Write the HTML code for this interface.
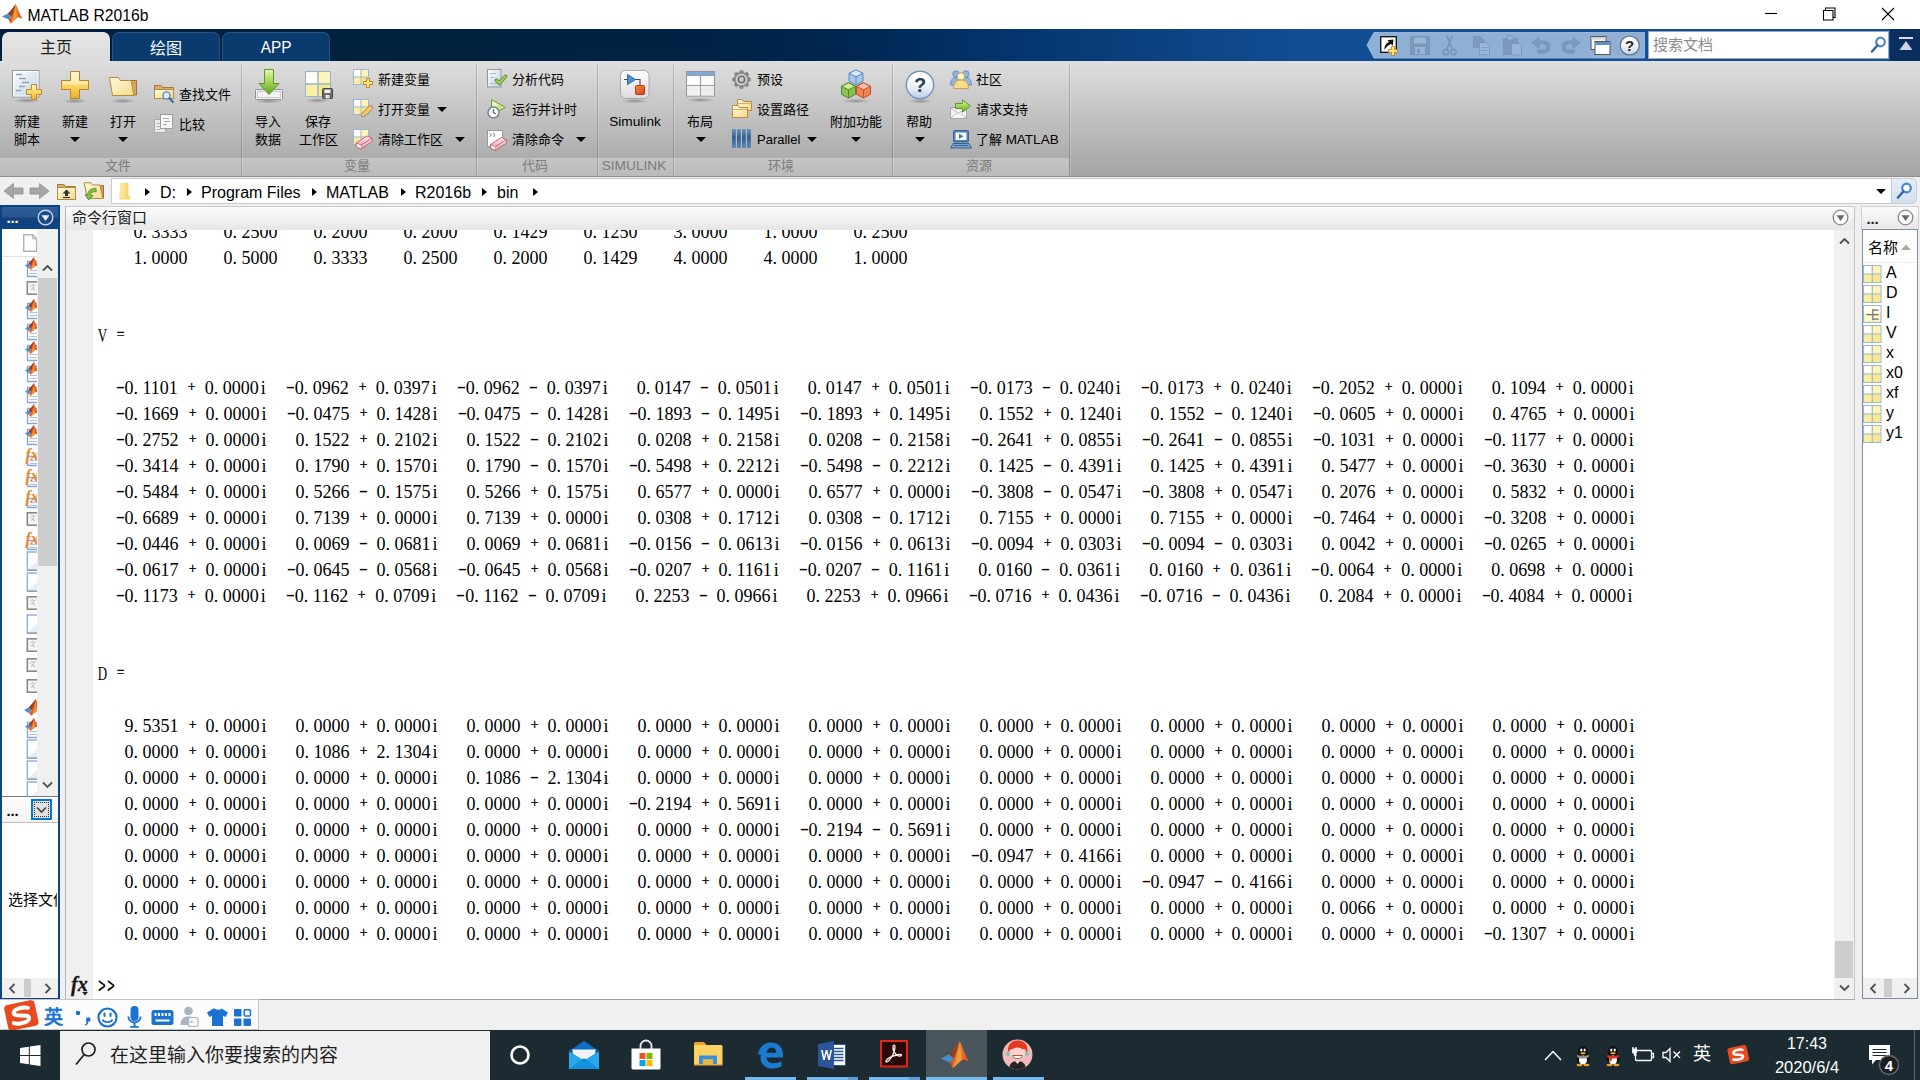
<!DOCTYPE html>
<html lang="zh-CN">
<head>
<meta charset="utf-8">
<title>MATLAB R2016b</title>
<style>
*{box-sizing:border-box;margin:0;padding:0}
html,body{width:1920px;height:1080px;overflow:hidden;background:#fff}
body{position:relative;font-family:"Liberation Sans",sans-serif;font-size:13px;color:#000;line-height:1}
.a{position:absolute}
.t{position:absolute;white-space:nowrap;line-height:1}
.c{text-align:center}
svg{position:absolute;overflow:visible}
/* title bar */
#titlebar{left:0;top:0;width:1920px;height:29px;background:#fff}
/* tab strip */
#tabstrip{left:0;top:29px;width:1920px;height:32px;background:linear-gradient(90deg,#02203d 0%,#01213f 25%,#002345 37%,#002853 45%,#03346c 52%,#0c4180 60%,#114e94 68%,#114f97 100%)}
.tab{position:absolute;top:3px;height:29px;width:108px;border-radius:7px 7px 0 0;font-size:16px;text-align:center;line-height:31px;color:#fff}
.tab.on{background:linear-gradient(#e6e6e6,#dcdcdc);color:#222}
.tab.off{background:#0a3b6e;border:1px solid #2a527f;border-bottom:none}
/* toolstrip */
#strip{left:0;top:61px;width:1920px;height:116px;background:linear-gradient(#dedede 0%,#dcdcdc 4%,#c0c0c0 50%,#a4a4a4 100%);border-bottom:1px solid #8e8e8e}
#band{left:0;top:97px;width:1069px;height:18px;background:linear-gradient(#c5c5c5,#bababa)}
.sep{position:absolute;top:3px;width:1px;height:111px;background:rgba(0,0,0,.17);box-shadow:1px 0 0 rgba(255,255,255,.22)}
.sl{position:absolute;top:96px;height:17px;line-height:17px;font-size:13px;color:#7b7b7b;text-align:center;white-space:nowrap}
.lb{position:absolute;font-size:13px;line-height:16px;white-space:nowrap;color:#000}
.lbc{position:absolute;font-size:13px;line-height:18px;white-space:nowrap;color:#000;text-align:center;width:80px}
.dd{position:absolute;width:0;height:0;border-left:5.5px solid transparent;border-right:5.5px solid transparent;border-top:5.5px solid #000}
#strip .lb,#strip .lbc{margin-top:.8px}
#strip .dd{margin-top:.8px}
/* address bar */
#addr{left:0;top:177px;width:1920px;height:28px;background:#f0f0f0}
#addrfield{left:111px;top:1px;width:1781px;height:26px;background:#fff;border:1px solid #c9c9c9}
.crumb{position:absolute;top:4.500px;font-size:16px;line-height:18px;white-space:nowrap}
.tri{position:absolute;top:8.500px;margin-left:1.500px;width:0;height:0;border-top:4.700px solid transparent;border-bottom:4.700px solid transparent;border-left:5.500px solid #000}
/* desktop */
#desk{left:0;top:205px;width:1920px;height:825px;background:#f0f0f0}
/* command window */
#cw{left:65px;top:1px;width:1790px;height:794px;border:1px solid #b2b2b2;border-top-color:#c9c9c9;border-right-color:#c4c4c4;border-bottom-color:#a2a2a2;background:#fff}
#cwhead{left:0;top:0;width:1788px;height:23px;background:linear-gradient(#fbfbfb,#f2f2f2 45%,#e6e6e6 100%)}
#gutter{left:0;top:23px;width:27px;height:769px;background:#f0f0f0}
#cwscroll{left:1768px;top:23px;width:20px;height:769px;background:#f0f0f0}
#cwtext{left:28px;top:23px;width:1740px;height:769px;overflow:hidden}
.ln{position:absolute;left:3.500px;margin-top:.5px;height:26px;line-height:26px;font-family:"Liberation Serif",serif;font-size:18px;white-space:pre;color:#000}
.ln q{display:inline-block;overflow:hidden;height:10px;quotes:none}
.ln q:before,.ln q:after{content:none}
.w1{width:9px}.w2{width:18px}.w3{width:27px}.w4{width:36px}.w5{width:45px}
.ln b,.ln i,.ln s,.ln u,.ln em{display:inline-block;width:9px;font-weight:normal;font-style:normal;text-decoration:none;text-align:center}
.ln s{text-align:left}
.ln b,.ln em{text-indent:-.6px;transform:translateY(-1.700px) scale(.76);-webkit-text-stroke:.5px #000}
.ln tt{display:inline-block;width:9px;text-align:center;text-indent:-2px;transform:translateY(-1px) scale(.68,1.32)}
.ln var{display:inline-block;width:9px;font-style:normal;text-indent:-2px;transform:scaleX(.72)}
.ln u{transform:translateY(-2.400px) scaleX(1.55)}
/* taskbar */
#taskbar{left:0;top:1030px;width:1920px;height:50px;background:#1b2b31}
#tsearch{left:60px;top:1px;width:430px;height:49px;background:#f0f0f0}
</style>
</head>
<body>
<svg width="0" height="0" style="left:-10px;top:-10px">
<defs>
  <linearGradient id="gGold" x1="0" y1="0" x2="0" y2="1"><stop offset="0" stop-color="#fff6bd"/><stop offset=".5" stop-color="#f9d961"/><stop offset="1" stop-color="#ecae30"/></linearGradient>
  <linearGradient id="gFold" x1="0" y1="0" x2="1" y2="1"><stop offset="0" stop-color="#fffbe0"/><stop offset="1" stop-color="#f3d98a"/></linearGradient>
  <linearGradient id="gDoc" x1="0" y1="0" x2="1" y2="1"><stop offset="0" stop-color="#ffffff"/><stop offset="1" stop-color="#bccfe3"/></linearGradient>
  <linearGradient id="gGreen" x1="0" y1="0" x2="0" y2="1"><stop offset="0" stop-color="#e8f3b0"/><stop offset=".55" stop-color="#9bcf4e"/><stop offset="1" stop-color="#5ea32b"/></linearGradient>
  <linearGradient id="gCell" x1="0" y1="0" x2="0" y2="1"><stop offset="0" stop-color="#fffbe0"/><stop offset="1" stop-color="#fbeb96"/></linearGradient>
  <linearGradient id="gBlueBar" x1="0" y1="0" x2="0" y2="1"><stop offset="0" stop-color="#6d93bd"/><stop offset=".45" stop-color="#2f5f94"/><stop offset="1" stop-color="#5a88b8"/></linearGradient>
  <linearGradient id="gPink" x1="0" y1="0" x2="0" y2="1"><stop offset="0" stop-color="#fbe3e6"/><stop offset="1" stop-color="#e9a0aa"/></linearGradient>
  <linearGradient id="gGlass" x1="0" y1="0" x2="0" y2="1"><stop offset="0" stop-color="#ffffff"/><stop offset=".6" stop-color="#e9eef5"/><stop offset="1" stop-color="#b9cbe0"/></linearGradient>
  <linearGradient id="gBtn" x1="0" y1="0" x2="0" y2="1"><stop offset="0" stop-color="#ffffff"/><stop offset="1" stop-color="#dcdcdc"/></linearGradient>
  <linearGradient id="gGray" x1="0" y1="0" x2="0" y2="1"><stop offset="0" stop-color="#fdfdfd"/><stop offset="1" stop-color="#d5d5d5"/></linearGradient>
  <linearGradient id="gOr" x1="0" y1="0" x2="1" y2="1"><stop offset="0" stop-color="#f4903a"/><stop offset="1" stop-color="#d63c1a"/></linearGradient>
  <radialGradient id="gShadow"><stop offset="0" stop-color="#000" stop-opacity=".28"/><stop offset="1" stop-color="#000" stop-opacity="0"/></radialGradient>
  <!-- 16px workspace variable grid -->
  <g id="vgrid">
    <rect x=".5" y=".5" width="15" height="15" fill="#fbf0a8" stroke="#9fb6d0"/>
    <rect x="1" y="1" width="6.5" height="6.5" fill="#ffffff"/>
    <rect x="8.5" y="1" width="6.5" height="6.5" fill="#fdf4b8"/>
    <rect x="1" y="8.5" width="6.5" height="6.5" fill="#fbeea0"/>
    <rect x="8.5" y="8.5" width="6.5" height="6.5" fill="#f9e88c"/>
    <path d="M8 .5V15.5M.5 8H15.5" stroke="#9fb6d0" stroke-width="1" fill="none"/>
  </g>
  <!-- small eraser -->
  <g id="eraser">
    <path d="M0 9.5 L11 2.5 L16 4.5 L16 8 L5 15.5 L0 13.5Z" fill="url(#gPink)" stroke="#c06a78" stroke-width="1"/>
    <path d="M0 9.5 L5 11.5 L16 4.5 M5 11.5V15.5" stroke="#c06a78" stroke-width="1" fill="none"/>
    <path d="M1 10.3 L5 12 L5 14.8 L1 13Z" fill="#fff" opacity=".85"/>
  </g>
  <!-- left panel file icons (22x20 box, page left edge x=7.5) -->
  <g id="icPage"><path d="M8.500 4.500h12v15h-12z" fill="#fbfcfe" stroke="#86a6d2" stroke-width="1.300"/><path d="M10.500 13.500h9M10.500 16.500h9" stroke="#b9c3d0"/></g>
  <g id="icLogo">
    <path d="M0 8.500l3.500-2 2.500 2-2.500 2.500z" fill="#4a90d0"/>
    <path d="M3.500 6.500C6 4.500 7.800 1.500 9 0c1 2 2.500 6.500 4.500 9.500-1.500-.5-2.500-.8-3.300-.5-1.500 1.300-3.200 3-4.700 3.800L4 11l2-2.500z" fill="#dd5a28"/>
    <path d="M3.500 6.500C6 4.500 7.800 1.500 9 0 8 3.500 7 6.500 6 8.500z" fill="#7a3324" opacity=".7"/>
    <path d="M9 0c.3 3.500.5 6.500 1.200 9-1.500 1.300-3.200 3-4.700 3.800C7.500 9.500 8.500 4.500 9 0z" fill="#f6a23a" opacity=".8"/>
  </g>
  <g id="icM"><use href="#icPage"/><use href="#icLogo" x="6" y="0"/></g>
  <g id="icG"><rect x="8.300" y="3.800" width="13" height="12.400" fill="#f6f6f6" stroke="#8a8a8a" stroke-width="1.600"/><path d="M11 8.500l2-2 2 1.500 1.500-1.500M12 11.500l2-1.500 2 2.500" stroke="#a9b7c9" fill="none"/><circle cx="14" cy="10" r="1.500" fill="#c3cedb"/></g>
  <g id="icF"><path d="M8.500 10.500h12v9h-12z" fill="#f4f7fb" stroke="#86a6d2" stroke-width="1.300"/><path d="M10.500 14.500h9M10.500 17.500h9" stroke="#b9c3d0"/>
    <text x="6.500" y="13.500" font-family="Liberation Serif" font-style="italic" font-weight="bold" font-size="16" fill="#e8862a">fx</text></g>
  <g id="icB"><path d="M8.300 1h13v18h-13z" fill="#fdfeff" stroke="#8db4e2" stroke-width="1.500"/><path d="M9.500 18l11-10v10z" fill="#e4edf8"/><path d="M8.300 19.300h13" stroke="#9a9a9a" stroke-width="1.200"/></g>
  <g id="icL"><use href="#icLogo" transform="translate(5,2) scale(1.3)"/></g>
  <!-- struct icon 16px -->
  <g id="icStruct"><rect x=".5" y=".5" width="15" height="15" fill="#fdf6c6" stroke="#9fb6d0"/><rect x="1" y="1" width="14" height="6" fill="#fffdf0"/>
    <path d="M3 8.500h5M8.500 3.500v10M8.500 4.500h5M8.500 8.500h5M8.500 12.500h5" stroke="#6f6f6f" fill="none"/></g>
</defs>
</svg>
<div id="titlebar" class="a">
  <svg style="left:2px;top:3px" width="22" height="22" viewBox="0 0 22 22">
    <defs><linearGradient id="gML" x1="0" y1="0" x2="1" y2="0"><stop offset="0" stop-color="#c9461f"/><stop offset=".5" stop-color="#f08a2c"/><stop offset="1" stop-color="#d4442a"/></linearGradient></defs>
    <path d="M0 13.500L6 10.500 9.500 13.500 6.500 16.500Z" fill="#4a90d0"/>
    <path d="M6 10.500C9 8 11.500 3.500 13.800 1 15 3.500 17.500 11 20.500 15.500 18 14.800 16.500 14.200 15.500 14.500 13 16.500 10.500 19.500 8.500 20.500 7.800 19 7 17.500 6.500 16.500L9.500 13.500Z" fill="url(#gML)"/>
    <path d="M6 10.500C9 8 11.500 3.500 13.800 1 12.500 6 11 10.500 9.500 13.500Z" fill="#7a3324" opacity=".75"/>
    <path d="M13.800 1C14.300 6 14.500 11 15.500 14.500 13 16.500 10.500 19.500 8.500 20.500 11 16 13 8 13.800 1Z" fill="#f6a23a" opacity=".7"/>
  </svg>
  <div class="t" style="left:27.500px;top:7.500px;font-size:15.700px;">MATLAB R2016b</div>
  <svg style="left:1760px;top:0" width="160" height="29" viewBox="0 0 160 29" fill="none" stroke="#000" stroke-width="1.100">
    <path d="M5 13.500h12"/>
    <path d="M63.500 10.500h9.500v9.500h-9.500zM65.500 10.500v-2.500h9.500v9.500h-2"/>
    <path d="M122 8l12 12M134 8l-12 12"/>
  </svg>
</div>
<div id="tabstrip" class="a">
  <div class="tab on" style="left:2px">主页</div>
  <div class="tab off" style="left:112px">绘图</div>
  <div class="tab off" style="left:222px"><span style="font-size:16px;position:relative;top:-1.500px;display:inline-block;transform:scaleX(.96)">APP</span></div>
  <!-- quick access toolbar -->
  <svg style="left:1366px;top:3px" width="280" height="27" viewBox="0 0 280 27">
    <path d="M1 13L8 .5H278.500V26H8Z" fill="#8fafd5" stroke="#a9c3e2" stroke-width=".8"/>
    <!-- new shortcut -->
    <g transform="translate(14,4)">
      <rect x=".7" y=".7" width="15.600" height="15.600" fill="#fff" stroke="#1a1a1a" stroke-width="1.400"/>
      <path d="M4.300 13.800c0-4.300 1.800-6.800 4.800-7.800L7.300 4.200l6.200-.7-.7 6.200-1.800-1.800c-2.700 1-4.700 3-6.700 5.900z" fill="#111"/>
      <path d="M11.500 10.500h3v3h3v3h-3v3h-3v-3h-3v-3h3z" fill="#ffe27a" stroke="#c08626" stroke-width=".9"/>
    </g>
    <g fill="#7894b8" stroke="#6f8cb2" stroke-width=".8" opacity=".8">
      <!-- save -->
      <path d="M44.500 4.500h19v18h-19z"/><rect x="48" y="5.500" width="12" height="6" fill="#9db8d8" stroke="none"/><rect x="49" y="15" width="10" height="7" fill="#9db8d8" stroke="none"/><rect x="51" y="17" width="3" height="4" fill="#7894b8" stroke="none"/>
      <!-- cut -->
      <path d="M86 4l-5 13M81 4l5 13" fill="none" stroke-width="1.500"/><circle cx="80" cy="20" r="2.600" fill="none" stroke-width="1.500"/><circle cx="87.500" cy="20" r="2.600" fill="none" stroke-width="1.500"/>
      <!-- copy -->
      <path d="M107.500 4.500h7l3 3v8h-10z"/><path d="M113.500 10.500h7l3 3v9h-10z" fill="#9db8d8"/>
      <path d="M115.500 15.500h6M115.500 18.500h6" stroke="#7894b8"/>
      <!-- paste -->
      <path d="M137.500 6.500h14v16h-14z"/><rect x="141.500" y="4" width="6" height="4" fill="#9db8d8"/><path d="M145.500 11.500h7l3 3v8.500h-10z" fill="#9db8d8"/>
      <!-- undo -->
      <path d="M166 11l7-6v4h5c4 0 6 2.500 6 6s-2.500 6-6 6h-6v-3h6c2 0 3-1 3-3s-1-3-3-3h-5v4z"/>
      <!-- redo -->
      <path d="M214 11l-7-6v4h-5c-4 0-6 2.500-6 6s2.500 6 6 6h6v-3h-6c-2 0-3-1-3-3s1-3 3-3h5v4z"/>
    </g>
    <!-- switch windows -->
    <g transform="translate(224.500,4)">
      <rect x=".5" y=".5" width="15" height="13" fill="#f4f4f4" stroke="#555"/><rect x="1" y="1" width="14" height="2.500" fill="#cfd6de"/>
      <rect x="4.500" y="5.500" width="15" height="13" fill="#fff" stroke="#555"/><rect x="5" y="6" width="14" height="3" fill="#5d8fc9"/>
    </g>
    <!-- help -->
    <circle cx="263.700" cy="13.500" r="9.500" fill="url(#gGlass)" stroke="#5f6f85" stroke-width="1.200"/>
    <text x="263.700" y="19" text-anchor="middle" font-family="Liberation Sans" font-weight="bold" font-size="15" fill="#222">?</text>
  </svg>
  <!-- search box -->
  <div class="a" style="left:1648px;top:2px;width:241px;height:28px;background:#fff;border:1px solid #9aa7b8">
    <div class="t" style="left:4px;top:5px;font-size:15px;color:#8c8c8c">搜索文档</div>
    <svg style="left:221px;top:4px" width="17" height="18" viewBox="0 0 17 18">
      <circle cx="10.500" cy="6" r="4.300" fill="#fff" stroke="#4a86cf" stroke-width="2.200"/>
      <path d="M7.300 9.500L2 15.500" stroke="#3a68a6" stroke-width="2.600" stroke-linecap="round"/>
    </svg>
  </div>
  <div class="a" style="left:1890px;top:0;width:30px;height:32px;background:#0a2e5d"></div>
  <svg style="left:1899px;top:8px" width="15" height="14" viewBox="0 0 15 14">
    <rect x="0" y="0" width="14" height="2" fill="#d5deea"/><path d="M7 4L13.500 13H.5Z" fill="#c9d5e3"/>
  </svg>
</div>
<div id="strip" class="a">
  <div id="band" class="a"></div>
  <div class="sep" style="left:241px"></div><div class="sep" style="left:476px"></div><div class="sep" style="left:597px"></div>
  <div class="sep" style="left:673px"></div><div class="sep" style="left:892px"></div><div class="sep" style="left:1069px"></div>
  <div class="sl" style="left:78px;width:80px">文件</div>
  <div class="sl" style="left:317px;width:80px">变量</div>
  <div class="sl" style="left:495px;width:80px">代码</div>
  <div class="sl" style="left:594px;width:80px;font-size:13.700px">SIMULINK</div>
  <div class="sl" style="left:741px;width:80px">环境</div>
  <div class="sl" style="left:939px;width:80px">资源</div>

  <!-- FILE -->
  <div class="lbc" style="left:-13px;top:51px">新建</div><div class="lbc" style="left:-13px;top:69px">脚本</div>
  <div class="lbc" style="left:35px;top:51px">新建</div><div class="dd" style="left:70px;top:75px"></div>
  <div class="lbc" style="left:83px;top:51px">打开</div><div class="dd" style="left:118px;top:75px"></div>
  <div class="lb" style="left:179px;top:25px">查找文件</div>
  <div class="lb" style="left:179px;top:55px">比较</div>
  <!-- VARIABLE -->
  <div class="lbc" style="left:228px;top:51px">导入</div><div class="lbc" style="left:228px;top:69px">数据</div>
  <div class="lbc" style="left:278px;top:51px">保存</div><div class="lbc" style="left:278px;top:69px">工作区</div>
  <div class="lb" style="left:378px;top:10px">新建变量</div>
  <div class="lb" style="left:378px;top:40px">打开变量</div><div class="dd" style="left:437px;top:45px"></div>
  <div class="lb" style="left:378px;top:70px">清除工作区</div><div class="dd" style="left:455px;top:75px"></div>
  <!-- CODE -->
  <div class="lb" style="left:512px;top:10px">分析代码</div>
  <div class="lb" style="left:512px;top:40px">运行并计时</div>
  <div class="lb" style="left:512px;top:70px">清除命令</div><div class="dd" style="left:576px;top:75px"></div>
  <!-- SIMULINK -->
  <div class="lbc" style="left:595px;top:51px;font-size:13.700px">Simulink</div>
  <!-- ENVIRONMENT -->
  <div class="lbc" style="left:660px;top:51px">布局</div><div class="dd" style="left:696px;top:75px"></div>
  <div class="lb" style="left:757px;top:10px">预设</div>
  <div class="lb" style="left:757px;top:40px">设置路径</div>
  <div class="lb" style="left:757px;top:70px;font-size:13px">Parallel</div><div class="dd" style="left:807px;top:75px"></div>
  <div class="lbc" style="left:816px;top:51px">附加功能</div><div class="dd" style="left:851px;top:75px"></div>
  <!-- RESOURCES -->
  <div class="lbc" style="left:879px;top:51px">帮助</div><div class="dd" style="left:915px;top:75px"></div>
  <div class="lb" style="left:976px;top:10px">社区</div>
  <div class="lb" style="left:976px;top:40px">请求支持</div>
  <div class="lb" style="left:976px;top:70px">了解 <span style="font-size:13.500px">MATLAB</span></div>
<!--STRIPICONS-->
</div>
<div id="sicons" class="a" style="left:0;top:0;width:0;height:0">
<!-- new script -->
<svg style="left:12px;top:70px" width="32" height="34" viewBox="0 0 32 34">
  <ellipse cx="15" cy="30.5" rx="14" ry="2.6" fill="url(#gShadow)"/>
  <rect x=".5" y=".5" width="26.5" height="26.5" fill="url(#gDoc)" stroke="#8d98a5"/>
  <rect x="1.5" y="1.5" width="24.5" height="24.5" fill="none" stroke="#fff" stroke-opacity=".8"/>
  <path d="M4 4.5h6M7 8.5h7M10 12.5h7M7 16.5h6M4 20.5h5" stroke="#98a2ad" stroke-width="1.3" fill="none"/>
  <path d="M19.5 14.5h5v5h5v5h-5v5h-5v-5h-5v-5h5z" fill="url(#gGold)" stroke="#c08a2c"/>
</svg>
<!-- new (plus) -->
<svg style="left:61px;top:71px" width="28" height="33" viewBox="0 0 28 33">
  <ellipse cx="14" cy="30" rx="12" ry="2.6" fill="url(#gShadow)"/>
  <path d="M9.5 .5h9v9h9v9h-9v9h-9v-9h-9v-9h9z" fill="url(#gGold)" stroke="#b8832a" stroke-linejoin="round"/>
  <path d="M10.5 1.5h7v9h9v3h-25v-3h9z" fill="#fff" opacity=".45"/>
</svg>
<!-- open folder -->
<svg style="left:109px;top:76px" width="30" height="28" viewBox="0 0 30 28">
  <ellipse cx="14" cy="25" rx="13" ry="2.4" fill="url(#gShadow)"/>
  <path d="M9 4.5H27.5V19H6Z" fill="#cfa563" stroke="#a3742f"/>
  <path d="M.5 1.5H9.5L11.5 4.5H22L25 19.5H3.5Z" fill="url(#gFold)" stroke="#b8893d" stroke-linejoin="round"/>
</svg>
<!-- find files -->
<svg style="left:154px;top:84px" width="22" height="20" viewBox="0 0 22 20">
  <path d="M.5 1.5H7L8.5 3.5H19.5V14.5H.5Z" fill="#d6ad68" stroke="#a87a35"/>
  <path d="M.5 5.5H19.5V14.5H.5Z" fill="url(#gFold)" stroke="#b8893d"/>
  <circle cx="12.5" cy="11.5" r="3.6" fill="#dfeefb" stroke="#5f86b3" stroke-width="1.4"/>
  <path d="M15.3 14.3L19 18" stroke="#3f689b" stroke-width="2" stroke-linecap="round"/>
</svg>
<!-- compare -->
<svg style="left:154px;top:114px" width="21" height="21" viewBox="0 0 21 21">
  <rect x=".5" y="5.5" width="11" height="13" fill="#ececec" stroke="#a9a9a9"/>
  <path d="M2.5 9.5h5M2.5 12.5h6M2.5 15.5h4" stroke="#b5b5b5"/>
  <rect x="6.5" y=".5" width="12" height="14" fill="#fafafa" stroke="#9c9c9c"/>
  <path d="M9 4.5h6M10 7.5h6M9 10.5h4" stroke="#a5a5a5"/>
</svg>
<!-- import data -->
<svg style="left:254px;top:69px" width="30" height="35" viewBox="0 0 30 35">
  <ellipse cx="15" cy="32" rx="14" ry="2.5" fill="url(#gShadow)"/>
  <rect x="1.5" y="20.5" width="27" height="10" rx="1" fill="#f4f4f4" stroke="#8f8f8f"/>
  <rect x="3.5" y="22.5" width="23" height="6" fill="none" stroke="#c9c9c9"/>
  <path d="M10.5 .5h9v14h5.5L15 25.5 5 14.5h5.5z" fill="url(#gGreen)" stroke="#5b9a2a" stroke-linejoin="round"/>
</svg>
<!-- save workspace -->
<svg style="left:305px;top:71px" width="30" height="33" viewBox="0 0 30 33">
  <ellipse cx="13" cy="29.5" rx="13" ry="2.5" fill="url(#gShadow)"/>
  <rect x=".5" y=".5" width="25" height="25" fill="#fbf0a6" stroke="#9ab2cf"/>
  <rect x="1.5" y="1.5" width="11" height="11" fill="#fff"/>
  <rect x="14" y="1.5" width="10.5" height="11" fill="#fdf5bd"/>
  <rect x="1.5" y="14" width="11" height="10.5" fill="#fbefa3"/>
  <rect x="14" y="14" width="10.5" height="10.5" fill="#f9e98e"/>
  <path d="M13 .5V25.5M.5 13H25.5" stroke="#9ab2cf" stroke-width="1.4"/>
  <rect x="17.5" y="17.5" width="10" height="10" rx="1" fill="#6b6b6b" stroke="#444"/>
  <rect x="19.5" y="18.5" width="6" height="3.5" fill="#f0f0f0"/><rect x="20.5" y="24" width="4" height="3.5" fill="#e6e6e6"/>
</svg>
<!-- new variable -->
<svg style="left:353px;top:69px" width="21" height="20" viewBox="0 0 21 20">
  <use href="#vgrid"/>
  <path d="M13.5 9.5h3v3h3v3h-3v3h-3v-3h-3v-3h3z" fill="#ffe68a" stroke="#c08626"/>
</svg>
<!-- open variable -->
<svg style="left:353px;top:99px" width="21" height="21" viewBox="0 0 21 21">
  <use href="#vgrid"/>
  <path d="M8.5 17.5L9.5 13.8 17 6.3 20 9.3 12.5 16.8Z" fill="#f2c879" stroke="#a9763a" stroke-width=".9"/>
  <path d="M17 6.3l3 3 .6-1.2-2.4-2.4z" fill="#e88a8a"/>
  <path d="M8.5 17.5l1-3.7 2.8 2.8z" fill="#f8e9c8" stroke="#a9763a" stroke-width=".6"/>
</svg>
<!-- clear workspace -->
<svg style="left:353px;top:129px" width="22" height="21" viewBox="0 0 22 21">
  <use href="#vgrid"/>
  <g transform="translate(3,4.5)"><use href="#eraser"/></g>
</svg>
<!-- analyze code -->
<svg style="left:487px;top:69px" width="22" height="21" viewBox="0 0 22 21">
  <rect x=".5" y=".5" width="13.500" height="17.5" fill="url(#gDoc)" stroke="#8d98a5"/>
  <path d="M3 4.500h6M3 8.500h4M3 14.500h7" stroke="#b3bcc6"/>
  <path d="M9.500 11.300l2.800 2.800L18.500 7.500" stroke="#5f962b" stroke-width="3.800" fill="none" stroke-linecap="round" stroke-linejoin="round"/>
  <path d="M9.500 11.300l2.800 2.800L18.500 7.500" stroke="#a6d05c" stroke-width="1.900" fill="none" stroke-linecap="round" stroke-linejoin="round"/>
</svg>
<!-- run and time -->
<svg style="left:487px;top:99px" width="22" height="21" viewBox="0 0 22 21">
  <path d="M4.500 .5L18.500 8.500 4.500 15.500Z" fill="#cfe58a" stroke="#6c9c33" stroke-linejoin="round"/>
  <path d="M5.500 2.300L12 6l-6.500 1z" fill="#fff" opacity=".7"/>
  <circle cx="6.500" cy="13.500" r="5.500" fill="#f6f8fa" stroke="#7b8794" stroke-width="1.500"/>
  <path d="M6.500 10.200v3.500l2.300 1.300" stroke="#55606c" stroke-width="1.200" fill="none"/>
</svg>
<!-- clear commands -->
<svg style="left:487px;top:130px" width="22" height="21" viewBox="0 0 22 21">
  <rect x=".5" y=".5" width="15" height="16" fill="#fdfdfd" stroke="#9a9a9a"/>
  <path d="M2.500 3l2 1.800-2 1.800M6 3l2 1.800L6 6.600" stroke="#6d6d6d" fill="none" stroke-width=".9"/>
  <g transform="translate(3.500,5)"><use href="#eraser"/></g>
</svg>
<!-- simulink -->
<svg style="left:620px;top:70px" width="30" height="34" viewBox="0 0 30 34">
  <ellipse cx="15" cy="31" rx="13" ry="2.400" fill="url(#gShadow)"/>
  <rect x=".5" y=".5" width="28.500" height="28" rx="5" fill="url(#gBtn)" stroke="#a9a9a9"/>
  <path d="M4 9.500h5M14.500 9.500h5.500v6" stroke="#4a4a4a" fill="none" stroke-width="1.100"/>
  <path d="M7.500 4.500L15.500 9.500 7.500 14.500Z" fill="#4f8fd1" stroke="#2b66a5"/>
  <rect x="15.500" y="15.500" width="9" height="9" rx="1" fill="url(#gOr)" stroke="#b8381a"/>
</svg>
<!-- layout -->
<svg style="left:686px;top:71px" width="30" height="33" viewBox="0 0 30 33">
  <ellipse cx="14.500" cy="29" rx="13.500" ry="2.400" fill="url(#gShadow)"/>
  <rect x=".5" y=".5" width="28" height="24.500" fill="#f4f4f4" stroke="#8f959c"/>
  <rect x="1" y="1" width="27" height="3.200" fill="#7faad8"/>
  <path d="M.5 4.500h28M14.500 4.500V25M.5 14.500h28" stroke="#9aa0a7" stroke-width="1.200"/>
  <rect x="1.500" y="5.500" width="12" height="8" fill="#fff"/><rect x="15.500" y="5.500" width="12.500" height="8" fill="#fafafa"/>
  <rect x="1.500" y="15.500" width="12" height="9" fill="#f1f1f1"/><rect x="15.500" y="15.500" width="12.500" height="9" fill="#ececec"/>
</svg>
<!-- preferences gear -->
<svg style="left:732px;top:70px" width="19" height="19" viewBox="-9.500 -9.500 19 19">
  <g fill="#8a8a8a"><rect x="-2" y="-9.300" width="4" height="18.600" rx="1"/><rect x="-2" y="-9.300" width="4" height="18.600" rx="1" transform="rotate(45)"/><rect x="-2" y="-9.300" width="4" height="18.600" rx="1" transform="rotate(90)"/><rect x="-2" y="-9.300" width="4" height="18.600" rx="1" transform="rotate(135)"/></g>
  <circle r="7" fill="#9b9b9b" stroke="#777" stroke-width=".8"/>
  <circle r="5.600" fill="#d9d9d9"/>
  <circle r="3.200" fill="#c9c9c9" stroke="#6e6e6e" stroke-width="1.600"/>
</svg>
<!-- set path -->
<svg style="left:732px;top:99px" width="21" height="20" viewBox="0 0 21 20">
  <path d="M5.500 .5H10L11.500 2.500H19.500V11.500H5.500Z" fill="url(#gFold)" stroke="#b8893d"/>
  <path d="M5.500 4.500H19.500" stroke="#d6ad68"/>
  <path d="M.5 6.500H6L7.500 8.500H15.500V18.500H.5Z" fill="url(#gFold)" stroke="#b8893d"/>
  <path d="M.5 10.500H15.500" stroke="#d6ad68"/>
</svg>
<!-- parallel -->
<svg style="left:732px;top:129px" width="20" height="20" viewBox="0 0 20 20">
  <rect x="0" y="0" width="3.800" height="19" fill="url(#gBlueBar)"/><rect x="5" y="0" width="3.800" height="19" fill="url(#gBlueBar)"/>
  <rect x="10" y="0" width="3.800" height="19" fill="url(#gBlueBar)"/><rect x="15" y="0" width="3.800" height="19" fill="url(#gBlueBar)"/>
</svg>
<!-- add-ons cubes -->
<svg style="left:840px;top:69px" width="32" height="35" viewBox="0 0 32 35">
  <ellipse cx="16" cy="32" rx="14" ry="2.400" fill="url(#gShadow)"/>
  <g stroke-linejoin="round">
  <path d="M16 .8l7 3.500v8l-7 3.700-7-3.700v-8z" fill="#a8c8e8" stroke="#5f8fc2"/>
  <path d="M9 4.300l7 3.500 7-3.500M16 7.800V16" stroke="#5f8fc2" fill="none"/><path d="M16 .8l7 3.500-7 3.500-7-3.500z" fill="#d6e7f7" stroke="#5f8fc2"/>
  <path d="M8.500 13.800l7 3.500v8l-7 3.700-7-3.700v-8z" fill="#8cc152" stroke="#4f8a28"/>
  <path d="M8.500 13.800l7 3.500-7 3.500-7-3.500z" fill="#d4e89a" stroke="#4f8a28"/><path d="M8.500 20.800V29" stroke="#4f8a28"/>
  <path d="M23.500 13.800l7 3.500v8l-7 3.700-7-3.700v-8z" fill="#ef8354" stroke="#c4502b"/>
  <path d="M23.500 13.800l7 3.500-7 3.500-7-3.500z" fill="#f7c0b0" stroke="#c4502b"/><path d="M23.500 20.800V29" stroke="#c4502b"/>
  </g>
</svg>
<!-- help -->
<svg style="left:905px;top:70px" width="30" height="34" viewBox="0 0 30 34">
  <ellipse cx="15" cy="31" rx="12" ry="2.400" fill="url(#gShadow)"/>
  <circle cx="15" cy="15" r="13.700" fill="url(#gGlass)" stroke="#6f93bb" stroke-width="1.400"/>
  <ellipse cx="15" cy="9" rx="10.500" ry="6.500" fill="#fff" opacity=".75"/>
  <text x="15" y="22" text-anchor="middle" font-family="Liberation Sans" font-weight="bold" font-size="20" fill="#2c3e57">?</text>
</svg>
<!-- community -->
<svg style="left:950px;top:69px" width="22" height="21" viewBox="0 0 22 21">
  <circle cx="6" cy="5" r="3.200" fill="#8fb6df" stroke="#5a86b8" stroke-width=".8"/><path d="M.5 16c0-5 2-7.500 5.500-7.500s5 2.500 5 7.500z" fill="#8fb6df" stroke="#5a86b8" stroke-width=".8"/>
  <circle cx="16" cy="5" r="3.200" fill="#8fb6df" stroke="#5a86b8" stroke-width=".8"/><path d="M10.500 16c0-5 2-7.500 5.500-7.500s5.500 2.500 5.500 7.500z" fill="#8fb6df" stroke="#5a86b8" stroke-width=".8"/>
  <circle cx="11" cy="7.500" r="3.800" fill="#fdf3c4" stroke="#c59a4a" stroke-width=".9"/><path d="M3.500 19.500c0-6 3-8.500 7.500-8.500s7.500 2.500 7.500 8.500z" fill="#f7dc8c" stroke="#c59a4a" stroke-width=".9"/>
</svg>
<!-- request support -->
<svg style="left:950px;top:99px" width="22" height="21" viewBox="0 0 22 21">
  <rect x=".5" y="8.500" width="16" height="11" fill="#f7f7f7" stroke="#a8a8a8"/>
  <path d="M.5 8.500l8 6 8-6M.5 19.500l6-5.500M16.500 19.500l-6-5.500" stroke="#b5b5b5" fill="none"/>
  <path d="M5.500 4.500h7V.8L20.500 7l-8 6.200V9.500h-7z" fill="url(#gGreen)" stroke="#5b9a2a" stroke-linejoin="round"/>
</svg>
<!-- learn matlab -->
<svg style="left:950px;top:130px" width="22" height="20" viewBox="0 0 22 20">
  <rect x="3.500" y=".5" width="15" height="11.500" rx="1" fill="#4f7fb5" stroke="#3a6394"/>
  <rect x="5.500" y="2.500" width="11" height="7.500" fill="#f4f8fc"/>
  <path d="M9 3.800l4.500 2.500L9 8.800z" fill="#3f6fa8"/>
  <path d="M3 13.500h16l2.500 4.500H.5z" fill="#7aa3cf" stroke="#3a6394"/>
  <path d="M4 15.500h14" stroke="#3a6394"/>
</svg>
</div>
<div id="addr" class="a">
  <!-- nav buttons -->
  <svg style="left:3px;top:4px" width="105" height="22" viewBox="0 0 105 22">
    <path d="M1 10L10.500 2.500V7H20V13H10.500V17.500Z" fill="#a6a6a6" stroke="#909090" stroke-width=".8"/>
    <path d="M46 10L36.500 2.500V7H27V13H36.500V17.500Z" fill="#a6a6a6" stroke="#909090" stroke-width=".8"/>
    <!-- up one level -->
    <g transform="translate(54,2)">
      <path d="M.5 1.500H7L8.500 3.500H18.500V16.500H.5Z" fill="#d6ad68" stroke="#a87a35"/>
      <path d="M.5 4.500H18.500V16.500H.5Z" fill="url(#gFold)" stroke="#b8893d"/>
      <path d="M9.500 6.500L13.500 10.500H11V13H8V10.500H5.500Z" fill="#333"/><path d="M6 14.500h7" stroke="#333" stroke-width="1.200"/>
    </g>
    <!-- browse -->
    <g transform="translate(80,1)">
      <path d="M4 3.500H20.500V16H7Z" fill="#c9a063" stroke="#a07030"/>
      <path d="M1 .8H8L9.500 3H17L20 16.500H4.500Z" fill="url(#gFold)" stroke="#b8893d"/>
      <path d="M13 6.500c-5-.5-8 2-8.500 6.500l-2.500-.5 3.800 5.500 4.400-4.500-2.500-.3c.3-2.500 2-4 5.500-3.500z" fill="#86bd3e" stroke="#4f8a28" stroke-width=".8"/>
    </g>
  </svg>
  <div id="addrfield" class="a">
    <svg style="left:6px;top:3px" width="14" height="18" viewBox="0 0 14 18">
      <path d="M2 1h8.500v12.500l2 1.500v2.500H1.500V13l.5-2z" fill="#f7d774"/><path d="M2 1h5v15.500H1.500V13l.5-2z" fill="#fbe59c"/>
    </svg>
    <div class="tri" style="left:31px"></div>
    <div class="crumb" style="left:48px">D:</div><div class="tri" style="left:73px"></div>
    <div class="crumb" style="left:89px">Program Files</div><div class="tri" style="left:198px"></div>
    <div class="crumb" style="left:214px">MATLAB</div><div class="tri" style="left:287px"></div>
    <div class="crumb" style="left:303px">R2016b</div><div class="tri" style="left:368px"></div>
    <div class="crumb" style="left:385px">bin</div><div class="tri" style="left:419px"></div>
    <div class="dd" style="left:1764px;top:10px;border-left-width:5px;border-right-width:5px;border-top-width:5.500px"></div>
  </div>
  <div class="a" style="left:1891px;top:1px;width:26px;height:26px;background:linear-gradient(#e6eef7,#d2e0ee);border:1px solid #c3cfdd;border-radius:0 5px 5px 0">
    <svg style="left:4px;top:3px" width="17" height="18" viewBox="0 0 17 18">
      <circle cx="10.500" cy="6" r="4.300" fill="#fff" stroke="#4a86cf" stroke-width="2.200"/>
      <path d="M7.300 9.500L2 15.500" stroke="#3a68a6" stroke-width="2.600" stroke-linecap="round"/>
    </svg>
  </div>
</div>
<div id="desk" class="a">
  <!-- LEFT PANEL (current folder, collapsed) : desk coords = abs y - 205 -->
  <div id="lp" class="a" style="left:0;top:0;width:60px;height:794px;background:#0f4583">
    <div class="a" style="left:0;top:0;width:60px;height:24px;background:#0e4182"></div>
    <div class="a" style="left:2px;top:2px;width:56px;height:21px;background:linear-gradient(#2d5e9a 0%,#26558f 46%,#12417e 54%,#0f4382 100%)"></div>
    <div class="t" style="left:6.500px;top:5px;font-size:15px;color:#fff;font-weight:bold;letter-spacing:-.2px">...</div>
    <svg style="left:37px;top:4px" width="17" height="17" viewBox="0 0 17 17">
      <circle cx="8.500" cy="8.500" r="7.300" fill="#1b4c89" stroke="#cbd6e4" stroke-width="1.400"/>
      <path d="M4.500 6.300h8L8.500 12z" fill="#eaf0f6"/>
    </svg>
    <div class="a" style="left:2px;top:24px;width:56px;height:768px;background:#fff"></div>
    <!-- file list (clipped by scrollbar) -->
    <div class="a" style="left:2px;top:24px;width:35px;height:567px;overflow:hidden">
      <svg style="left:21px;top:5px" width="18" height="18" viewBox="0 0 18 18"><path d="M.7 .7h9l4 4v12.500H.7z" fill="#fdfdfd" stroke="#b2b2b2" stroke-width="1.400"/><path d="M9.700 .7v4h4" fill="none" stroke="#b2b2b2" stroke-width="1.200"/></svg>
      <div class="a" style="left:0;top:27px;width:35px;height:1px;background:#e3e3e3"></div>
<svg style="left:17px;top:28.0px" width="22" height="20" viewBox="0 0 22 20"><use href="#icM"/></svg>
<svg style="left:17px;top:49.0px" width="22" height="20" viewBox="0 0 22 20"><use href="#icG"/></svg>
<svg style="left:17px;top:69.9px" width="22" height="20" viewBox="0 0 22 20"><use href="#icM"/></svg>
<svg style="left:17px;top:90.9px" width="22" height="20" viewBox="0 0 22 20"><use href="#icM"/></svg>
<svg style="left:17px;top:111.9px" width="22" height="20" viewBox="0 0 22 20"><use href="#icM"/></svg>
<svg style="left:17px;top:132.9px" width="22" height="20" viewBox="0 0 22 20"><use href="#icM"/></svg>
<svg style="left:17px;top:153.8px" width="22" height="20" viewBox="0 0 22 20"><use href="#icM"/></svg>
<svg style="left:17px;top:174.8px" width="22" height="20" viewBox="0 0 22 20"><use href="#icM"/></svg>
<svg style="left:17px;top:195.8px" width="22" height="20" viewBox="0 0 22 20"><use href="#icM"/></svg>
<svg style="left:17px;top:216.7px" width="22" height="20" viewBox="0 0 22 20"><use href="#icF"/></svg>
<svg style="left:17px;top:237.7px" width="22" height="20" viewBox="0 0 22 20"><use href="#icF"/></svg>
<svg style="left:17px;top:258.7px" width="22" height="20" viewBox="0 0 22 20"><use href="#icF"/></svg>
<svg style="left:17px;top:279.6px" width="22" height="20" viewBox="0 0 22 20"><use href="#icG"/></svg>
<svg style="left:17px;top:300.6px" width="22" height="20" viewBox="0 0 22 20"><use href="#icF"/></svg>
<svg style="left:17px;top:321.6px" width="22" height="20" viewBox="0 0 22 20"><use href="#icB"/></svg>
<svg style="left:17px;top:342.5px" width="22" height="20" viewBox="0 0 22 20"><use href="#icB"/></svg>
<svg style="left:17px;top:363.5px" width="22" height="20" viewBox="0 0 22 20"><use href="#icG"/></svg>
<svg style="left:17px;top:384.5px" width="22" height="20" viewBox="0 0 22 20"><use href="#icB"/></svg>
<svg style="left:17px;top:405.5px" width="22" height="20" viewBox="0 0 22 20"><use href="#icG"/></svg>
<svg style="left:17px;top:426.4px" width="22" height="20" viewBox="0 0 22 20"><use href="#icG"/></svg>
<svg style="left:17px;top:447.4px" width="22" height="20" viewBox="0 0 22 20"><use href="#icG"/></svg>
<svg style="left:17px;top:468.4px" width="22" height="20" viewBox="0 0 22 20"><use href="#icL"/></svg>
<svg style="left:17px;top:489.3px" width="22" height="20" viewBox="0 0 22 20"><use href="#icM"/></svg>
<svg style="left:17px;top:510.3px" width="22" height="20" viewBox="0 0 22 20"><use href="#icB"/></svg>
<svg style="left:17px;top:531.3px" width="22" height="20" viewBox="0 0 22 20"><use href="#icB"/></svg>
<svg style="left:17px;top:552.2px" width="22" height="20" viewBox="0 0 22 20"><use href="#icB"/></svg>
    </div>
    <!-- vertical scrollbar -->
    <div class="a" style="left:37px;top:24px;width:21px;height:567px;background:#f0f0f0">
      <svg style="left:5px;top:35px" width="11" height="8" viewBox="0 0 11 8"><path d="M1 6.500L5.500 2 10 6.500" fill="none" stroke="#505050" stroke-width="1.800"/></svg>
      <div class="a" style="left:1px;top:49px;width:19px;height:288px;background:#cdcdcd"></div>
      <svg style="left:5px;top:552px" width="11" height="8" viewBox="0 0 11 8"><path d="M1 1.500L5.500 6 10 1.500" fill="none" stroke="#505050" stroke-width="1.800"/></svg>
    </div>
    <!-- details bar -->
    <div class="a" style="left:2px;top:591px;width:56px;height:1px;background:#7a7a7a"></div>
    <div class="a" style="left:2px;top:592px;width:56px;height:25px;background:linear-gradient(#fdfdfd,#f3f3f3)"></div>
    <div class="t" style="left:6.500px;top:597.500px;font-size:15px;color:#000;font-weight:bold;letter-spacing:-.2px">...</div>
    <div class="a" style="left:31px;top:594px;width:21px;height:21px;background:#e1e1e1;border:2px solid #0078d7">
      <div class="a" style="left:1px;top:1px;width:15px;height:15px;border:1px dotted #333"></div>
      <svg style="left:3px;top:5px" width="11" height="8" viewBox="0 0 11 8"><path d="M1 1.500L5.500 6 10 1.500" fill="none" stroke="#404040" stroke-width="1.600"/></svg>
    </div>
    <div class="a" style="left:2px;top:617px;width:56px;height:1px;background:#bcbcbc"></div>
    <div class="a" style="left:2px;top:618px;width:55px;height:155px;overflow:hidden"><div class="t" style="left:6px;top:69px;font-size:15px">选择文件</div></div>
    <!-- horizontal scrollbar -->
    <div class="a" style="left:2px;top:773px;width:56px;height:20px;background:#f0f0f0">
      <svg style="left:6px;top:5px" width="8" height="11" viewBox="0 0 8 11"><path d="M6.500 1L2 5.500 6.500 10" fill="none" stroke="#505050" stroke-width="1.800"/></svg>
      <div class="a" style="left:22px;top:1px;width:7px;height:18px;background:#cdcdcd"></div>
      <svg style="left:42px;top:5px" width="8" height="11" viewBox="0 0 8 11"><path d="M1.500 1L6 5.500 1.500 10" fill="none" stroke="#505050" stroke-width="1.800"/></svg>
    </div>
  </div>

  <!-- COMMAND WINDOW -->
  <div id="cw" class="a">
    <div id="cwhead" class="a"><div class="t" style="left:6px;top:3px;font-size:15px;color:#1a1a1a">命令行窗口</div>
      <svg style="left:1766px;top:2px" width="17" height="17" viewBox="0 0 17 17">
        <circle cx="8.500" cy="8.500" r="7.300" fill="#fdfdfd" stroke="#8a8a8a" stroke-width="1.300"/>
        <path d="M4.500 6.300h8L8.500 12z" fill="#6a6a6a"/>
      </svg>
    </div>
    <div id="gutter" class="a"></div>
    <div id="cwtext" class="a">
<div class="ln" style="top:-12px"><q class="w4">    </q>0<s>.</s>3333<q class="w4">    </q>0<s>.</s>2500<q class="w4">    </q>0<s>.</s>2000<q class="w4">    </q>0<s>.</s>2000<q class="w4">    </q>0<s>.</s>1429<q class="w4">    </q>0<s>.</s>1250<q class="w4">    </q>3<s>.</s>0000<q class="w4">    </q>1<s>.</s>0000<q class="w4">    </q>0<s>.</s>2500</div>
<div class="ln" style="top:14px"><q class="w4">    </q>1<s>.</s>0000<q class="w4">    </q>0<s>.</s>5000<q class="w4">    </q>0<s>.</s>3333<q class="w4">    </q>0<s>.</s>2500<q class="w4">    </q>0<s>.</s>2000<q class="w4">    </q>0<s>.</s>1429<q class="w4">    </q>4<s>.</s>0000<q class="w4">    </q>4<s>.</s>0000<q class="w4">    </q>1<s>.</s>0000</div>
<div class="ln" style="top:92px"><var>V</var><q class="w1"> </q><em>=</em></div>
<div class="ln" style="top:144px"><q class="w2">  </q><u>-</u>0<s>.</s>1101<q class="w1"> </q><b>+</b><q class="w1"> </q>0<s>.</s>0000<i>i</i><q class="w2">  </q><u>-</u>0<s>.</s>0962<q class="w1"> </q><b>+</b><q class="w1"> </q>0<s>.</s>0397<i>i</i><q class="w2">  </q><u>-</u>0<s>.</s>0962<q class="w1"> </q><u>-</u><q class="w1"> </q>0<s>.</s>0397<i>i</i><q class="w3">   </q>0<s>.</s>0147<q class="w1"> </q><u>-</u><q class="w1"> </q>0<s>.</s>0501<i>i</i><q class="w3">   </q>0<s>.</s>0147<q class="w1"> </q><b>+</b><q class="w1"> </q>0<s>.</s>0501<i>i</i><q class="w2">  </q><u>-</u>0<s>.</s>0173<q class="w1"> </q><u>-</u><q class="w1"> </q>0<s>.</s>0240<i>i</i><q class="w2">  </q><u>-</u>0<s>.</s>0173<q class="w1"> </q><b>+</b><q class="w1"> </q>0<s>.</s>0240<i>i</i><q class="w2">  </q><u>-</u>0<s>.</s>2052<q class="w1"> </q><b>+</b><q class="w1"> </q>0<s>.</s>0000<i>i</i><q class="w3">   </q>0<s>.</s>1094<q class="w1"> </q><b>+</b><q class="w1"> </q>0<s>.</s>0000<i>i</i></div>
<div class="ln" style="top:170px"><q class="w2">  </q><u>-</u>0<s>.</s>1669<q class="w1"> </q><b>+</b><q class="w1"> </q>0<s>.</s>0000<i>i</i><q class="w2">  </q><u>-</u>0<s>.</s>0475<q class="w1"> </q><b>+</b><q class="w1"> </q>0<s>.</s>1428<i>i</i><q class="w2">  </q><u>-</u>0<s>.</s>0475<q class="w1"> </q><u>-</u><q class="w1"> </q>0<s>.</s>1428<i>i</i><q class="w2">  </q><u>-</u>0<s>.</s>1893<q class="w1"> </q><u>-</u><q class="w1"> </q>0<s>.</s>1495<i>i</i><q class="w2">  </q><u>-</u>0<s>.</s>1893<q class="w1"> </q><b>+</b><q class="w1"> </q>0<s>.</s>1495<i>i</i><q class="w3">   </q>0<s>.</s>1552<q class="w1"> </q><b>+</b><q class="w1"> </q>0<s>.</s>1240<i>i</i><q class="w3">   </q>0<s>.</s>1552<q class="w1"> </q><u>-</u><q class="w1"> </q>0<s>.</s>1240<i>i</i><q class="w2">  </q><u>-</u>0<s>.</s>0605<q class="w1"> </q><b>+</b><q class="w1"> </q>0<s>.</s>0000<i>i</i><q class="w3">   </q>0<s>.</s>4765<q class="w1"> </q><b>+</b><q class="w1"> </q>0<s>.</s>0000<i>i</i></div>
<div class="ln" style="top:196px"><q class="w2">  </q><u>-</u>0<s>.</s>2752<q class="w1"> </q><b>+</b><q class="w1"> </q>0<s>.</s>0000<i>i</i><q class="w3">   </q>0<s>.</s>1522<q class="w1"> </q><b>+</b><q class="w1"> </q>0<s>.</s>2102<i>i</i><q class="w3">   </q>0<s>.</s>1522<q class="w1"> </q><u>-</u><q class="w1"> </q>0<s>.</s>2102<i>i</i><q class="w3">   </q>0<s>.</s>0208<q class="w1"> </q><b>+</b><q class="w1"> </q>0<s>.</s>2158<i>i</i><q class="w3">   </q>0<s>.</s>0208<q class="w1"> </q><u>-</u><q class="w1"> </q>0<s>.</s>2158<i>i</i><q class="w2">  </q><u>-</u>0<s>.</s>2641<q class="w1"> </q><b>+</b><q class="w1"> </q>0<s>.</s>0855<i>i</i><q class="w2">  </q><u>-</u>0<s>.</s>2641<q class="w1"> </q><u>-</u><q class="w1"> </q>0<s>.</s>0855<i>i</i><q class="w2">  </q><u>-</u>0<s>.</s>1031<q class="w1"> </q><b>+</b><q class="w1"> </q>0<s>.</s>0000<i>i</i><q class="w2">  </q><u>-</u>0<s>.</s>1177<q class="w1"> </q><b>+</b><q class="w1"> </q>0<s>.</s>0000<i>i</i></div>
<div class="ln" style="top:222px"><q class="w2">  </q><u>-</u>0<s>.</s>3414<q class="w1"> </q><b>+</b><q class="w1"> </q>0<s>.</s>0000<i>i</i><q class="w3">   </q>0<s>.</s>1790<q class="w1"> </q><b>+</b><q class="w1"> </q>0<s>.</s>1570<i>i</i><q class="w3">   </q>0<s>.</s>1790<q class="w1"> </q><u>-</u><q class="w1"> </q>0<s>.</s>1570<i>i</i><q class="w2">  </q><u>-</u>0<s>.</s>5498<q class="w1"> </q><b>+</b><q class="w1"> </q>0<s>.</s>2212<i>i</i><q class="w2">  </q><u>-</u>0<s>.</s>5498<q class="w1"> </q><u>-</u><q class="w1"> </q>0<s>.</s>2212<i>i</i><q class="w3">   </q>0<s>.</s>1425<q class="w1"> </q><u>-</u><q class="w1"> </q>0<s>.</s>4391<i>i</i><q class="w3">   </q>0<s>.</s>1425<q class="w1"> </q><b>+</b><q class="w1"> </q>0<s>.</s>4391<i>i</i><q class="w3">   </q>0<s>.</s>5477<q class="w1"> </q><b>+</b><q class="w1"> </q>0<s>.</s>0000<i>i</i><q class="w2">  </q><u>-</u>0<s>.</s>3630<q class="w1"> </q><b>+</b><q class="w1"> </q>0<s>.</s>0000<i>i</i></div>
<div class="ln" style="top:248px"><q class="w2">  </q><u>-</u>0<s>.</s>5484<q class="w1"> </q><b>+</b><q class="w1"> </q>0<s>.</s>0000<i>i</i><q class="w3">   </q>0<s>.</s>5266<q class="w1"> </q><u>-</u><q class="w1"> </q>0<s>.</s>1575<i>i</i><q class="w3">   </q>0<s>.</s>5266<q class="w1"> </q><b>+</b><q class="w1"> </q>0<s>.</s>1575<i>i</i><q class="w3">   </q>0<s>.</s>6577<q class="w1"> </q><b>+</b><q class="w1"> </q>0<s>.</s>0000<i>i</i><q class="w3">   </q>0<s>.</s>6577<q class="w1"> </q><b>+</b><q class="w1"> </q>0<s>.</s>0000<i>i</i><q class="w2">  </q><u>-</u>0<s>.</s>3808<q class="w1"> </q><u>-</u><q class="w1"> </q>0<s>.</s>0547<i>i</i><q class="w2">  </q><u>-</u>0<s>.</s>3808<q class="w1"> </q><b>+</b><q class="w1"> </q>0<s>.</s>0547<i>i</i><q class="w3">   </q>0<s>.</s>2076<q class="w1"> </q><b>+</b><q class="w1"> </q>0<s>.</s>0000<i>i</i><q class="w3">   </q>0<s>.</s>5832<q class="w1"> </q><b>+</b><q class="w1"> </q>0<s>.</s>0000<i>i</i></div>
<div class="ln" style="top:274px"><q class="w2">  </q><u>-</u>0<s>.</s>6689<q class="w1"> </q><b>+</b><q class="w1"> </q>0<s>.</s>0000<i>i</i><q class="w3">   </q>0<s>.</s>7139<q class="w1"> </q><b>+</b><q class="w1"> </q>0<s>.</s>0000<i>i</i><q class="w3">   </q>0<s>.</s>7139<q class="w1"> </q><b>+</b><q class="w1"> </q>0<s>.</s>0000<i>i</i><q class="w3">   </q>0<s>.</s>0308<q class="w1"> </q><b>+</b><q class="w1"> </q>0<s>.</s>1712<i>i</i><q class="w3">   </q>0<s>.</s>0308<q class="w1"> </q><u>-</u><q class="w1"> </q>0<s>.</s>1712<i>i</i><q class="w3">   </q>0<s>.</s>7155<q class="w1"> </q><b>+</b><q class="w1"> </q>0<s>.</s>0000<i>i</i><q class="w3">   </q>0<s>.</s>7155<q class="w1"> </q><b>+</b><q class="w1"> </q>0<s>.</s>0000<i>i</i><q class="w2">  </q><u>-</u>0<s>.</s>7464<q class="w1"> </q><b>+</b><q class="w1"> </q>0<s>.</s>0000<i>i</i><q class="w2">  </q><u>-</u>0<s>.</s>3208<q class="w1"> </q><b>+</b><q class="w1"> </q>0<s>.</s>0000<i>i</i></div>
<div class="ln" style="top:300px"><q class="w2">  </q><u>-</u>0<s>.</s>0446<q class="w1"> </q><b>+</b><q class="w1"> </q>0<s>.</s>0000<i>i</i><q class="w3">   </q>0<s>.</s>0069<q class="w1"> </q><u>-</u><q class="w1"> </q>0<s>.</s>0681<i>i</i><q class="w3">   </q>0<s>.</s>0069<q class="w1"> </q><b>+</b><q class="w1"> </q>0<s>.</s>0681<i>i</i><q class="w2">  </q><u>-</u>0<s>.</s>0156<q class="w1"> </q><u>-</u><q class="w1"> </q>0<s>.</s>0613<i>i</i><q class="w2">  </q><u>-</u>0<s>.</s>0156<q class="w1"> </q><b>+</b><q class="w1"> </q>0<s>.</s>0613<i>i</i><q class="w2">  </q><u>-</u>0<s>.</s>0094<q class="w1"> </q><b>+</b><q class="w1"> </q>0<s>.</s>0303<i>i</i><q class="w2">  </q><u>-</u>0<s>.</s>0094<q class="w1"> </q><u>-</u><q class="w1"> </q>0<s>.</s>0303<i>i</i><q class="w3">   </q>0<s>.</s>0042<q class="w1"> </q><b>+</b><q class="w1"> </q>0<s>.</s>0000<i>i</i><q class="w2">  </q><u>-</u>0<s>.</s>0265<q class="w1"> </q><b>+</b><q class="w1"> </q>0<s>.</s>0000<i>i</i></div>
<div class="ln" style="top:326px"><q class="w2">  </q><u>-</u>0<s>.</s>0617<q class="w1"> </q><b>+</b><q class="w1"> </q>0<s>.</s>0000<i>i</i><q class="w2">  </q><u>-</u>0<s>.</s>0645<q class="w1"> </q><u>-</u><q class="w1"> </q>0<s>.</s>0568<i>i</i><q class="w2">  </q><u>-</u>0<s>.</s>0645<q class="w1"> </q><b>+</b><q class="w1"> </q>0<s>.</s>0568<i>i</i><q class="w2">  </q><u>-</u>0<s>.</s>0207<q class="w1"> </q><b>+</b><q class="w1"> </q>0<s>.</s>1161<i>i</i><q class="w2">  </q><u>-</u>0<s>.</s>0207<q class="w1"> </q><u>-</u><q class="w1"> </q>0<s>.</s>1161<i>i</i><q class="w3">   </q>0<s>.</s>0160<q class="w1"> </q><u>-</u><q class="w1"> </q>0<s>.</s>0361<i>i</i><q class="w3">   </q>0<s>.</s>0160<q class="w1"> </q><b>+</b><q class="w1"> </q>0<s>.</s>0361<i>i</i><q class="w2">  </q><u>-</u>0<s>.</s>0064<q class="w1"> </q><b>+</b><q class="w1"> </q>0<s>.</s>0000<i>i</i><q class="w3">   </q>0<s>.</s>0698<q class="w1"> </q><b>+</b><q class="w1"> </q>0<s>.</s>0000<i>i</i></div>
<div class="ln" style="top:352px"><q class="w2">  </q><u>-</u>0<s>.</s>1173<q class="w1"> </q><b>+</b><q class="w1"> </q>0<s>.</s>0000<i>i</i><q class="w2">  </q><u>-</u>0<s>.</s>1162<q class="w1"> </q><b>+</b><q class="w1"> </q>0<s>.</s>0709<i>i</i><q class="w2">  </q><u>-</u>0<s>.</s>1162<q class="w1"> </q><u>-</u><q class="w1"> </q>0<s>.</s>0709<i>i</i><q class="w3">   </q>0<s>.</s>2253<q class="w1"> </q><u>-</u><q class="w1"> </q>0<s>.</s>0966<i>i</i><q class="w3">   </q>0<s>.</s>2253<q class="w1"> </q><b>+</b><q class="w1"> </q>0<s>.</s>0966<i>i</i><q class="w2">  </q><u>-</u>0<s>.</s>0716<q class="w1"> </q><b>+</b><q class="w1"> </q>0<s>.</s>0436<i>i</i><q class="w2">  </q><u>-</u>0<s>.</s>0716<q class="w1"> </q><u>-</u><q class="w1"> </q>0<s>.</s>0436<i>i</i><q class="w3">   </q>0<s>.</s>2084<q class="w1"> </q><b>+</b><q class="w1"> </q>0<s>.</s>0000<i>i</i><q class="w2">  </q><u>-</u>0<s>.</s>4084<q class="w1"> </q><b>+</b><q class="w1"> </q>0<s>.</s>0000<i>i</i></div>
<div class="ln" style="top:430px"><var>D</var><q class="w1"> </q><em>=</em></div>
<div class="ln" style="top:482px"><q class="w3">   </q>9<s>.</s>5351<q class="w1"> </q><b>+</b><q class="w1"> </q>0<s>.</s>0000<i>i</i><q class="w3">   </q>0<s>.</s>0000<q class="w1"> </q><b>+</b><q class="w1"> </q>0<s>.</s>0000<i>i</i><q class="w3">   </q>0<s>.</s>0000<q class="w1"> </q><b>+</b><q class="w1"> </q>0<s>.</s>0000<i>i</i><q class="w3">   </q>0<s>.</s>0000<q class="w1"> </q><b>+</b><q class="w1"> </q>0<s>.</s>0000<i>i</i><q class="w3">   </q>0<s>.</s>0000<q class="w1"> </q><b>+</b><q class="w1"> </q>0<s>.</s>0000<i>i</i><q class="w3">   </q>0<s>.</s>0000<q class="w1"> </q><b>+</b><q class="w1"> </q>0<s>.</s>0000<i>i</i><q class="w3">   </q>0<s>.</s>0000<q class="w1"> </q><b>+</b><q class="w1"> </q>0<s>.</s>0000<i>i</i><q class="w3">   </q>0<s>.</s>0000<q class="w1"> </q><b>+</b><q class="w1"> </q>0<s>.</s>0000<i>i</i><q class="w3">   </q>0<s>.</s>0000<q class="w1"> </q><b>+</b><q class="w1"> </q>0<s>.</s>0000<i>i</i></div>
<div class="ln" style="top:508px"><q class="w3">   </q>0<s>.</s>0000<q class="w1"> </q><b>+</b><q class="w1"> </q>0<s>.</s>0000<i>i</i><q class="w3">   </q>0<s>.</s>1086<q class="w1"> </q><b>+</b><q class="w1"> </q>2<s>.</s>1304<i>i</i><q class="w3">   </q>0<s>.</s>0000<q class="w1"> </q><b>+</b><q class="w1"> </q>0<s>.</s>0000<i>i</i><q class="w3">   </q>0<s>.</s>0000<q class="w1"> </q><b>+</b><q class="w1"> </q>0<s>.</s>0000<i>i</i><q class="w3">   </q>0<s>.</s>0000<q class="w1"> </q><b>+</b><q class="w1"> </q>0<s>.</s>0000<i>i</i><q class="w3">   </q>0<s>.</s>0000<q class="w1"> </q><b>+</b><q class="w1"> </q>0<s>.</s>0000<i>i</i><q class="w3">   </q>0<s>.</s>0000<q class="w1"> </q><b>+</b><q class="w1"> </q>0<s>.</s>0000<i>i</i><q class="w3">   </q>0<s>.</s>0000<q class="w1"> </q><b>+</b><q class="w1"> </q>0<s>.</s>0000<i>i</i><q class="w3">   </q>0<s>.</s>0000<q class="w1"> </q><b>+</b><q class="w1"> </q>0<s>.</s>0000<i>i</i></div>
<div class="ln" style="top:534px"><q class="w3">   </q>0<s>.</s>0000<q class="w1"> </q><b>+</b><q class="w1"> </q>0<s>.</s>0000<i>i</i><q class="w3">   </q>0<s>.</s>0000<q class="w1"> </q><b>+</b><q class="w1"> </q>0<s>.</s>0000<i>i</i><q class="w3">   </q>0<s>.</s>1086<q class="w1"> </q><u>-</u><q class="w1"> </q>2<s>.</s>1304<i>i</i><q class="w3">   </q>0<s>.</s>0000<q class="w1"> </q><b>+</b><q class="w1"> </q>0<s>.</s>0000<i>i</i><q class="w3">   </q>0<s>.</s>0000<q class="w1"> </q><b>+</b><q class="w1"> </q>0<s>.</s>0000<i>i</i><q class="w3">   </q>0<s>.</s>0000<q class="w1"> </q><b>+</b><q class="w1"> </q>0<s>.</s>0000<i>i</i><q class="w3">   </q>0<s>.</s>0000<q class="w1"> </q><b>+</b><q class="w1"> </q>0<s>.</s>0000<i>i</i><q class="w3">   </q>0<s>.</s>0000<q class="w1"> </q><b>+</b><q class="w1"> </q>0<s>.</s>0000<i>i</i><q class="w3">   </q>0<s>.</s>0000<q class="w1"> </q><b>+</b><q class="w1"> </q>0<s>.</s>0000<i>i</i></div>
<div class="ln" style="top:560px"><q class="w3">   </q>0<s>.</s>0000<q class="w1"> </q><b>+</b><q class="w1"> </q>0<s>.</s>0000<i>i</i><q class="w3">   </q>0<s>.</s>0000<q class="w1"> </q><b>+</b><q class="w1"> </q>0<s>.</s>0000<i>i</i><q class="w3">   </q>0<s>.</s>0000<q class="w1"> </q><b>+</b><q class="w1"> </q>0<s>.</s>0000<i>i</i><q class="w2">  </q><u>-</u>0<s>.</s>2194<q class="w1"> </q><b>+</b><q class="w1"> </q>0<s>.</s>5691<i>i</i><q class="w3">   </q>0<s>.</s>0000<q class="w1"> </q><b>+</b><q class="w1"> </q>0<s>.</s>0000<i>i</i><q class="w3">   </q>0<s>.</s>0000<q class="w1"> </q><b>+</b><q class="w1"> </q>0<s>.</s>0000<i>i</i><q class="w3">   </q>0<s>.</s>0000<q class="w1"> </q><b>+</b><q class="w1"> </q>0<s>.</s>0000<i>i</i><q class="w3">   </q>0<s>.</s>0000<q class="w1"> </q><b>+</b><q class="w1"> </q>0<s>.</s>0000<i>i</i><q class="w3">   </q>0<s>.</s>0000<q class="w1"> </q><b>+</b><q class="w1"> </q>0<s>.</s>0000<i>i</i></div>
<div class="ln" style="top:586px"><q class="w3">   </q>0<s>.</s>0000<q class="w1"> </q><b>+</b><q class="w1"> </q>0<s>.</s>0000<i>i</i><q class="w3">   </q>0<s>.</s>0000<q class="w1"> </q><b>+</b><q class="w1"> </q>0<s>.</s>0000<i>i</i><q class="w3">   </q>0<s>.</s>0000<q class="w1"> </q><b>+</b><q class="w1"> </q>0<s>.</s>0000<i>i</i><q class="w3">   </q>0<s>.</s>0000<q class="w1"> </q><b>+</b><q class="w1"> </q>0<s>.</s>0000<i>i</i><q class="w2">  </q><u>-</u>0<s>.</s>2194<q class="w1"> </q><u>-</u><q class="w1"> </q>0<s>.</s>5691<i>i</i><q class="w3">   </q>0<s>.</s>0000<q class="w1"> </q><b>+</b><q class="w1"> </q>0<s>.</s>0000<i>i</i><q class="w3">   </q>0<s>.</s>0000<q class="w1"> </q><b>+</b><q class="w1"> </q>0<s>.</s>0000<i>i</i><q class="w3">   </q>0<s>.</s>0000<q class="w1"> </q><b>+</b><q class="w1"> </q>0<s>.</s>0000<i>i</i><q class="w3">   </q>0<s>.</s>0000<q class="w1"> </q><b>+</b><q class="w1"> </q>0<s>.</s>0000<i>i</i></div>
<div class="ln" style="top:612px"><q class="w3">   </q>0<s>.</s>0000<q class="w1"> </q><b>+</b><q class="w1"> </q>0<s>.</s>0000<i>i</i><q class="w3">   </q>0<s>.</s>0000<q class="w1"> </q><b>+</b><q class="w1"> </q>0<s>.</s>0000<i>i</i><q class="w3">   </q>0<s>.</s>0000<q class="w1"> </q><b>+</b><q class="w1"> </q>0<s>.</s>0000<i>i</i><q class="w3">   </q>0<s>.</s>0000<q class="w1"> </q><b>+</b><q class="w1"> </q>0<s>.</s>0000<i>i</i><q class="w3">   </q>0<s>.</s>0000<q class="w1"> </q><b>+</b><q class="w1"> </q>0<s>.</s>0000<i>i</i><q class="w2">  </q><u>-</u>0<s>.</s>0947<q class="w1"> </q><b>+</b><q class="w1"> </q>0<s>.</s>4166<i>i</i><q class="w3">   </q>0<s>.</s>0000<q class="w1"> </q><b>+</b><q class="w1"> </q>0<s>.</s>0000<i>i</i><q class="w3">   </q>0<s>.</s>0000<q class="w1"> </q><b>+</b><q class="w1"> </q>0<s>.</s>0000<i>i</i><q class="w3">   </q>0<s>.</s>0000<q class="w1"> </q><b>+</b><q class="w1"> </q>0<s>.</s>0000<i>i</i></div>
<div class="ln" style="top:638px"><q class="w3">   </q>0<s>.</s>0000<q class="w1"> </q><b>+</b><q class="w1"> </q>0<s>.</s>0000<i>i</i><q class="w3">   </q>0<s>.</s>0000<q class="w1"> </q><b>+</b><q class="w1"> </q>0<s>.</s>0000<i>i</i><q class="w3">   </q>0<s>.</s>0000<q class="w1"> </q><b>+</b><q class="w1"> </q>0<s>.</s>0000<i>i</i><q class="w3">   </q>0<s>.</s>0000<q class="w1"> </q><b>+</b><q class="w1"> </q>0<s>.</s>0000<i>i</i><q class="w3">   </q>0<s>.</s>0000<q class="w1"> </q><b>+</b><q class="w1"> </q>0<s>.</s>0000<i>i</i><q class="w3">   </q>0<s>.</s>0000<q class="w1"> </q><b>+</b><q class="w1"> </q>0<s>.</s>0000<i>i</i><q class="w2">  </q><u>-</u>0<s>.</s>0947<q class="w1"> </q><u>-</u><q class="w1"> </q>0<s>.</s>4166<i>i</i><q class="w3">   </q>0<s>.</s>0000<q class="w1"> </q><b>+</b><q class="w1"> </q>0<s>.</s>0000<i>i</i><q class="w3">   </q>0<s>.</s>0000<q class="w1"> </q><b>+</b><q class="w1"> </q>0<s>.</s>0000<i>i</i></div>
<div class="ln" style="top:664px"><q class="w3">   </q>0<s>.</s>0000<q class="w1"> </q><b>+</b><q class="w1"> </q>0<s>.</s>0000<i>i</i><q class="w3">   </q>0<s>.</s>0000<q class="w1"> </q><b>+</b><q class="w1"> </q>0<s>.</s>0000<i>i</i><q class="w3">   </q>0<s>.</s>0000<q class="w1"> </q><b>+</b><q class="w1"> </q>0<s>.</s>0000<i>i</i><q class="w3">   </q>0<s>.</s>0000<q class="w1"> </q><b>+</b><q class="w1"> </q>0<s>.</s>0000<i>i</i><q class="w3">   </q>0<s>.</s>0000<q class="w1"> </q><b>+</b><q class="w1"> </q>0<s>.</s>0000<i>i</i><q class="w3">   </q>0<s>.</s>0000<q class="w1"> </q><b>+</b><q class="w1"> </q>0<s>.</s>0000<i>i</i><q class="w3">   </q>0<s>.</s>0000<q class="w1"> </q><b>+</b><q class="w1"> </q>0<s>.</s>0000<i>i</i><q class="w3">   </q>0<s>.</s>0066<q class="w1"> </q><b>+</b><q class="w1"> </q>0<s>.</s>0000<i>i</i><q class="w3">   </q>0<s>.</s>0000<q class="w1"> </q><b>+</b><q class="w1"> </q>0<s>.</s>0000<i>i</i></div>
<div class="ln" style="top:690px"><q class="w3">   </q>0<s>.</s>0000<q class="w1"> </q><b>+</b><q class="w1"> </q>0<s>.</s>0000<i>i</i><q class="w3">   </q>0<s>.</s>0000<q class="w1"> </q><b>+</b><q class="w1"> </q>0<s>.</s>0000<i>i</i><q class="w3">   </q>0<s>.</s>0000<q class="w1"> </q><b>+</b><q class="w1"> </q>0<s>.</s>0000<i>i</i><q class="w3">   </q>0<s>.</s>0000<q class="w1"> </q><b>+</b><q class="w1"> </q>0<s>.</s>0000<i>i</i><q class="w3">   </q>0<s>.</s>0000<q class="w1"> </q><b>+</b><q class="w1"> </q>0<s>.</s>0000<i>i</i><q class="w3">   </q>0<s>.</s>0000<q class="w1"> </q><b>+</b><q class="w1"> </q>0<s>.</s>0000<i>i</i><q class="w3">   </q>0<s>.</s>0000<q class="w1"> </q><b>+</b><q class="w1"> </q>0<s>.</s>0000<i>i</i><q class="w3">   </q>0<s>.</s>0000<q class="w1"> </q><b>+</b><q class="w1"> </q>0<s>.</s>0000<i>i</i><q class="w2">  </q><u>-</u>0<s>.</s>1307<q class="w1"> </q><b>+</b><q class="w1"> </q>0<s>.</s>0000<i>i</i></div>
      <div class="ln" style="top:742px"><tt>&gt;</tt><tt>&gt;</tt></div>
    </div>
    <div class="t" style="left:5px;top:767px;font-family:'Liberation Serif',serif;font-style:italic;font-weight:bold;font-size:20px;color:#161616;-webkit-text-stroke:.3px #161616">fx</div>
    <svg style="left:16px;top:785px" width="7" height="4" viewBox="0 0 7 4"><path d="M0 0h6L3 3.500z" fill="#222"/></svg>
    <div id="cwscroll" class="a">
      <svg style="left:5px;top:7px" width="11" height="8" viewBox="0 0 11 8"><path d="M1 6.500L5.500 2 10 6.500" fill="none" stroke="#505050" stroke-width="1.800"/></svg>
      <div class="a" style="left:1px;top:711px;width:18px;height:37px;background:#cdcdcd"></div>
      <svg style="left:5px;top:754px" width="11" height="8" viewBox="0 0 11 8"><path d="M1 1.500L5.500 6 10 1.500" fill="none" stroke="#505050" stroke-width="1.800"/></svg>
    </div>
  </div>

  <!-- RIGHT PANEL (workspace, collapsed) -->
  <div id="rp" class="a" style="left:1861px;top:1px;width:58px;height:793px">
    <div class="a" style="left:0;top:0;width:58px;height:24px;background:linear-gradient(#fbfbfb,#f2f2f2 45%,#e6e6e6);border:1px solid #d0d0d0;border-bottom:none"></div>
    <div class="t" style="left:5.500px;top:5px;font-size:15px;color:#222;font-weight:bold;letter-spacing:-.2px">...</div>
    <svg style="left:36px;top:3px" width="17" height="17" viewBox="0 0 17 17">
      <circle cx="8.500" cy="8.500" r="7.300" fill="#fdfdfd" stroke="#8a8a8a" stroke-width="1.300"/>
      <path d="M4.500 6.300h8L8.500 12z" fill="#6a6a6a"/>
    </svg>
    <div class="a" style="left:1px;top:23px;width:56px;height:770px;background:#fff;border:1px solid #7f8ca3;overflow:hidden">
      <div class="t" style="left:5px;top:10px;font-size:15px">名称</div>
      <svg style="left:38px;top:14px" width="10" height="6" viewBox="0 0 10 6"><path d="M0 6L5 .5 10 6z" fill="#a9ad9a"/></svg>
      <div class="a" style="left:0;top:32px;width:56px;height:1px;background:#ececec"></div>
<svg style="left:0px;top:34.5px" width="18.500" height="18" viewBox="0 0 16 16" preserveAspectRatio="none"><use href="#vgrid"/></svg><div class="t" style="left:23px;top:35.0px;font-size:16px">A</div>
<svg style="left:0px;top:54.5px" width="18.500" height="18" viewBox="0 0 16 16" preserveAspectRatio="none"><use href="#vgrid"/></svg><div class="t" style="left:23px;top:55.0px;font-size:16px">D</div>
<svg style="left:0px;top:74.6px" width="18.500" height="18" viewBox="0 0 16 16" preserveAspectRatio="none"><use href="#icStruct"/></svg><div class="t" style="left:23px;top:75.1px;font-size:16px">I</div>
<svg style="left:0px;top:94.6px" width="18.500" height="18" viewBox="0 0 16 16" preserveAspectRatio="none"><use href="#vgrid"/></svg><div class="t" style="left:23px;top:95.1px;font-size:16px">V</div>
<svg style="left:0px;top:114.6px" width="18.500" height="18" viewBox="0 0 16 16" preserveAspectRatio="none"><use href="#vgrid"/></svg><div class="t" style="left:23px;top:115.1px;font-size:16px">x</div>
<svg style="left:0px;top:134.6px" width="18.500" height="18" viewBox="0 0 16 16" preserveAspectRatio="none"><use href="#vgrid"/></svg><div class="t" style="left:23px;top:135.1px;font-size:16px">x0</div>
<svg style="left:0px;top:154.7px" width="18.500" height="18" viewBox="0 0 16 16" preserveAspectRatio="none"><use href="#vgrid"/></svg><div class="t" style="left:23px;top:155.2px;font-size:16px">xf</div>
<svg style="left:0px;top:174.7px" width="18.500" height="18" viewBox="0 0 16 16" preserveAspectRatio="none"><use href="#vgrid"/></svg><div class="t" style="left:23px;top:175.2px;font-size:16px">y</div>
<svg style="left:0px;top:194.7px" width="18.500" height="18" viewBox="0 0 16 16" preserveAspectRatio="none"><use href="#vgrid"/></svg><div class="t" style="left:23px;top:195.2px;font-size:16px">y1</div>
      <div class="a" style="left:0;top:748px;width:54px;height:20px;background:#f0f0f0">
        <svg style="left:6px;top:5px" width="8" height="11" viewBox="0 0 8 11"><path d="M6.500 1L2 5.500 6.500 10" fill="none" stroke="#505050" stroke-width="1.800"/></svg>
        <div class="a" style="left:21px;top:1px;width:8px;height:18px;background:#cdcdcd"></div>
        <svg style="left:40px;top:5px" width="8" height="11" viewBox="0 0 8 11"><path d="M1.500 1L6 5.500 1.500 10" fill="none" stroke="#505050" stroke-width="1.800"/></svg>
      </div>
    </div>
  </div>
</div>
<!-- status strip + IME toolbar -->
<div class="a" style="left:0;top:999px;width:259px;height:31px;background:#fcfcfc;border:1px solid #c4c4c4;border-left:none"></div>
<svg style="left:2px;top:997.500px" width="258" height="36" viewBox="0 0 258 36">
  <g transform="rotate(-12 19 18)"><rect x="4" y="4.500" width="31" height="26" rx="4" fill="#e9491c"/>
    <path d="M27.500 11.500C24 9.500 13.500 9 12.500 13.500 11.500 18.500 27 16.500 26.500 21.500 26 26 15 26 10.500 23.500" fill="none" stroke="#fff" stroke-width="4" stroke-linecap="round"/></g>
  <g fill="#1b72d1" stroke="none">
    <text x="42" y="25.500" font-family="Liberation Sans" font-weight="bold" font-size="19" >英</text>
    <circle cx="76" cy="15" r="2.300"/><path d="M84 21.500a2.300 2.300 0 1 1 2.300 2.300c0 1.800-1 3.200-2.800 4l-.8-1c1.200-.6 1.800-1.500 1.800-2.500-.3-.5-.5-1-.5-2.800z"/>
  </g>
  <g fill="none" stroke="#1b72d1" stroke-width="2.200">
    <circle cx="105.500" cy="19.500" r="9"/><path d="M100.500 21.500c1.500 3.500 8.500 3.500 10 0" stroke-width="1.800"/>
  </g>
  <g fill="#1b72d1"><rect x="101.500" y="14.500" width="2" height="4.500" rx="1"/><rect x="107.500" y="14.500" width="2" height="4.500" rx="1"/>
    <rect x="128.500" y="8" width="8" height="15" rx="4"/><path d="M125.500 18.500c0 9 14 9 14 0h-1.800c0 6.500-10.400 6.500-10.400 0z"/><rect x="131.500" y="25" width="2" height="3.500"/><rect x="128" y="28" width="9" height="1.800" rx=".9"/>
    <path d="M152 12h17a2.500 2.500 0 0 1 2.500 2.500v10a2.500 2.500 0 0 1-2.500 2.500h-17a2.500 2.500 0 0 1-2.500-2.500v-10a2.500 2.500 0 0 1 2.500-2.500z"/>
  </g>
  <g fill="#fff"><rect x="152.500" y="15" width="2" height="3"/><rect x="156" y="15" width="2" height="3"/><rect x="159.500" y="15" width="2" height="3"/><rect x="163" y="15" width="2" height="3"/><rect x="166.500" y="15" width="2" height="3"/><rect x="153.500" y="21.500" width="14" height="2"/></g>
  <g fill="#a9b5c2"><circle cx="186.500" cy="13" r="4.300"/><path d="M178.500 27c0-6 3-8.500 8-8.500 2 0 3.500.5 4.500 1.300V27z"/><rect x="186.500" y="19.500" width="9.500" height="9" rx="1" fill="#f4f6f8" stroke="#a9b5c2" stroke-width="1.200"/><rect x="188.500" y="23" width="2" height="2"/></g>
  <path d="M211.500 10.500l-6.500 4 2.500 4.500 2.500-1.200V28h11V17.800l2.500 1.200 2.500-4.500-6.500-4c-1 1.600-4.500 1.600-7 0z" fill="#1b72d1"/>
  <g fill="#1b72d1"><rect x="232" y="11" width="7.500" height="7.500" rx="1"/><rect x="232" y="20.500" width="7.500" height="7.500" rx="1"/><rect x="241.500" y="20.500" width="7.500" height="7.500" rx="1"/><rect x="242.200" y="11.700" width="6.200" height="6.200" rx="1" fill="none" stroke="#1b72d1" stroke-width="1.500"/></g>
</svg>
<div id="taskbar" class="a">
  <!-- start -->
  <svg style="left:20px;top:15px" width="21" height="21" viewBox="0 0 21 21" fill="#fff">
    <path d="M0 3l8.800-1.300v8.300H0zM9.800 1.500L20.500 0v10H9.800zM0 11h8.800v8.300L0 18zM9.800 11H20.500v10L9.800 19.500z"/>
  </svg>
  <!-- search box -->
  <div id="tsearch" class="a">
    <svg style="left:15px;top:10px" width="22" height="25" viewBox="0 0 22 25" fill="none" stroke="#1d1d1d" stroke-width="1.700">
      <circle cx="13.500" cy="8.500" r="6.500"/><path d="M9.200 13.500L1 23.500"/>
    </svg>
    <div class="t" style="left:50px;top:15px;font-size:19px;color:#1f1f1f">在这里输入你要搜索的内容</div>
  </div>
  <!-- cortana -->
  <svg style="left:509px;top:14px" width="22" height="22" viewBox="0 0 22 22"><circle cx="11" cy="11" r="8.500" fill="none" stroke="#fff" stroke-width="2.600"/></svg>
  <!-- mail -->
  <svg style="left:568px;top:10px" width="32" height="30" viewBox="0 0 32 30">
    <path d="M1 11L16 1l15 10z" fill="#0f6cc4"/>
    <path d="M4.500 9.500h23v10h-23z" fill="#f4f4f4"/>
    <path d="M1 11l15 9.500L31 11v18H1z" fill="#28a8ea"/>
    <path d="M1 29l15-11 15 11z" fill="#1490df"/>
  </svg>
  <!-- store -->
  <svg style="left:631px;top:9px" width="30" height="32" viewBox="0 0 30 32">
    <path d="M9.500 10V7a5.500 5.500 0 0 1 11 0v3" fill="none" stroke="#e9e9e9" stroke-width="1.800"/>
    <path d="M.5 9.500h29V29a1.500 1.500 0 0 1-1.500 1.500H2A1.500 1.500 0 0 1 .5 29z" fill="#fff"/>
    <rect x="8.500" y="14" width="6" height="6" fill="#f25022"/><rect x="15.500" y="14" width="6" height="6" fill="#7fba00"/>
    <rect x="8.500" y="21" width="6" height="6" fill="#00a4ef"/><rect x="15.500" y="21" width="6" height="6" fill="#ffb900"/>
  </svg>
  <!-- explorer -->
  <svg style="left:694px;top:12px" width="29" height="25" viewBox="0 0 29 25">
    <path d="M0 1.500A1.500 1.500 0 0 1 1.500 0H10l2.500 3H0z" fill="#eda22e"/>
    <path d="M0 3h27a1.500 1.500 0 0 1 1.500 1.500V22H0z" fill="#fbd262"/>
    <path d="M5 23v-9.500h18V23h-4v-5.500H9V23z" fill="#3e8ede"/>
    <rect x="9" y="17.500" width="10" height="5" fill="#e9b740"/>
    <rect x="0" y="22" width="28.500" height="1.500" fill="#e9a83a"/>
  </svg>
  <!-- edge -->
  <svg style="left:757px;top:12px" width="27" height="27" viewBox="0 0 27 27">
    <path d="M1 12.500C2 5 7.500 .5 14 .5c7.500 0 12 5 12 12v3H9.500c.3 4 3.500 5.800 7.500 5.800 3 0 5.500-.8 7.500-2v5c-2.500 1.400-5.500 2.200-9 2.200C8 26.500 3.500 22 3.500 16c0-4 2-7.500 6-9.500C7 8 6 10 5.500 12.500zM9.600 10.800h9.800C19.400 7.500 17.500 5.500 14.500 5.500c-2.800 0-4.500 2.200-4.900 5.300z" fill="#1c7ad2"/>
  </svg>
  <!-- word -->
  <svg style="left:818px;top:11px" width="28" height="28" viewBox="0 0 28 28">
    <rect x="13" y="3.500" width="14.500" height="21" fill="#fff" stroke="#2b579a"/>
    <path d="M16 7.500h9.500M16 10.500h9.500M16 13.500h9.500M16 16.500h9.500M16 19.500h9.500" stroke="#2b579a" stroke-width="1.400"/>
    <path d="M0 3L16 0v28L0 25z" fill="#2b579a"/>
    <path d="M3 9l2.200 10h1.600L8.500 12l1.700 7h1.600L14 9h-1.700l-1.300 6.800L9.300 9H7.800L6.100 15.800 4.800 9z" fill="#fff"/>
  </svg>
  <!-- acrobat -->
  <svg style="left:880px;top:10px" width="28" height="28" viewBox="0 0 28 28">
    <rect x="1" y="1" width="26" height="25.500" fill="#2b0606" stroke="#e3261c" stroke-width="2"/>
    <path d="M6 21c1-2.500 5.500-5 13-6.500 2.500-.4 3.500.8 1.500 1.500-3 .8-8-3.500-7.500-9.500.2-1.800 1.800-1.800 2 0 .3 4-3 11-6.500 14.500-1.500 1.300-3 1.300-2.500 0z" fill="none" stroke="#f3e9e6" stroke-width="1.300"/>
  </svg>
  <!-- matlab (active) -->
  <div class="a" style="left:926px;top:0;width:61px;height:50px;background:#4a565b"></div>
  <svg style="left:940px;top:10px" width="32" height="30" viewBox="0 0 22 22">
    <path d="M0 13.500L6 10.500 9.500 13.500 6.500 16.500Z" fill="#4a90d0"/>
    <path d="M6 10.500C9 8 11.500 3.500 13.800 1 15 3.500 17.500 11 20.500 15.500 18 14.800 16.500 14.200 15.500 14.500 13 16.500 10.500 19.500 8.500 20.500 7.800 19 7 17.500 6.500 16.500L9.500 13.500Z" fill="url(#gML)"/>
    <path d="M6 10.500C9 8 11.500 3.500 13.800 1 12.500 6 11 10.500 9.500 13.500Z" fill="#7a3324" opacity=".75"/>
    <path d="M13.800 1C14.300 6 14.500 11 15.500 14.500 13 16.500 10.500 19.500 8.500 20.500 11 16 13 8 13.800 1Z" fill="#f6a23a" opacity=".7"/>
  </svg>
  <!-- avatar -->
  <svg style="left:1002px;top:9px" width="31" height="31" viewBox="0 0 31 31">
    <defs><clipPath id="avc"><circle cx="15.500" cy="15.500" r="15"/></clipPath></defs>
    <g clip-path="url(#avc)"><rect width="31" height="31" fill="#f3b9bd"/>
      <path d="M6 13C5 4 12 1 16 1.500 22 1 27 6 25 14l-2-4H9z" fill="#e23a1f"/>
      <ellipse cx="15.500" cy="14.500" rx="7.500" ry="6" fill="#f9d3cc"/>
      <path d="M10.500 16.500h10c0 4-10 4-10 0z" fill="#fff" stroke="#8a3a30" stroke-width=".8"/>
      <circle cx="6" cy="15" r="2" fill="#7cc6c0"/><circle cx="25" cy="15" r="2" fill="#7cc6c0"/>
      <path d="M7 31c0-7 4-9 8.500-9s8.500 2 8.500 9z" fill="#2a2326"/>
      <path d="M13 22l2.500 3 2.500-3z" fill="#f9d3cc"/>
    </g>
  </svg>
  <!-- running indicators -->
  <div class="a" style="left:745px;top:47px;width:51px;height:3px;background:#76b9ed"></div>
  <div class="a" style="left:807px;top:47px;width:51px;height:3px;background:#76b9ed"></div><div class="a" style="left:848px;top:47px;width:10px;height:3px;background:#5d9bd0"></div>
  <div class="a" style="left:869px;top:47px;width:51px;height:3px;background:#76b9ed"></div><div class="a" style="left:909px;top:47px;width:11px;height:3px;background:#5d9bd0"></div>
  <div class="a" style="left:926px;top:47px;width:61px;height:3px;background:#76b9ed"></div>
  <div class="a" style="left:993px;top:47px;width:51px;height:3px;background:#76b9ed"></div>
  <!-- tray -->
  <svg style="left:1544px;top:20px" width="18" height="11" viewBox="0 0 18 11"><path d="M1 10L9 1.500 17 10" fill="none" stroke="#fff" stroke-width="1.500"/></svg>
  <svg style="left:1574px;top:15px" width="48" height="22" viewBox="0 0 48 22">
    <g id="qq"><ellipse cx="9" cy="13" rx="6.500" ry="7" fill="#111"/><ellipse cx="9" cy="6" rx="4.800" ry="5" fill="#111"/><ellipse cx="9" cy="15" rx="4" ry="4.500" fill="#fff"/>
      <ellipse cx="7.300" cy="5" rx="1.100" ry="1.600" fill="#fff"/><ellipse cx="10.700" cy="5" rx="1.100" ry="1.600" fill="#fff"/><ellipse cx="9" cy="8.300" rx="2.600" ry="1" fill="#f5b21a"/>
      <ellipse cx="5.500" cy="20" rx="3" ry="1.300" fill="#f5a21a"/><ellipse cx="12.500" cy="20" rx="3" ry="1.300" fill="#f5a21a"/></g>
    <path d="M3.500 9.500c3 2 8 2 11 0l.5 2.500c-3.500 2-8.500 2-12 0z" fill="#8f8f8f"/>
    <use href="#qq" x="30"/>
    <path d="M33.500 9.500c3 2 8 2 11 0l.5 2.500c-3.500 2-8.500 2-12 0z" fill="#e0301e"/><path d="M36 11.500l-1 5 2.500-.8.800-3.800z" fill="#e0301e"/>
  </svg>
  <!-- battery -->
  <svg style="left:1632px;top:16px" width="22" height="16" viewBox="0 0 22 16" fill="none" stroke="#fff" stroke-width="1.300">
    <rect x="3.500" y="4.500" width="16" height="10" rx="1"/><path d="M20 7.500h1.500v4H20"/>
    <path d="M1 1v2.500M4 1v2.500" /><rect x=".8" y="3.200" width="3.600" height="3.500" fill="#fff"/><path d="M2.500 6.500v2.500h2" />
  </svg>
  <!-- volume muted -->
  <svg style="left:1662px;top:17px" width="20" height="16" viewBox="0 0 20 16" fill="none" stroke="#fff" stroke-width="1.300">
    <path d="M1 5.500h3l4-4v13l-4-4H1z"/><path d="M11.500 4.500l6.500 6.500M18 4.500L11.500 11"/>
  </svg>
  <div class="t" style="left:1693px;top:15px;font-size:18px;color:#fff">英</div>
  <!-- sogou small -->
  <svg style="left:1726px;top:13px" width="24" height="24" viewBox="0 0 38 36">
    <g transform="rotate(-12 19 18)"><rect x="4" y="4.500" width="31" height="26" rx="4" fill="#e9491c"/>
    <path d="M27.500 11.500C24 9.500 13.500 9 12.500 13.500 11.500 18.500 27 16.500 26.500 21.500 26 26 15 26 10.500 23.500" fill="none" stroke="#fff" stroke-width="4" stroke-linecap="round"/></g>
  </svg>
  <div class="t c" style="left:1767px;top:6px;width:80px;font-size:16px;color:#fff">17:43</div>
  <div class="t c" style="left:1767px;top:29px;width:80px;font-size:16.500px;color:#fff">2020/6/4</div>
  <!-- notifications -->
  <svg style="left:1868px;top:14px" width="34" height="32" viewBox="0 0 34 32">
    <path d="M1 1h21v15h-14l-4 4.500V16H1z" fill="#fff"/>
    <path d="M4.500 5.500h14M4.500 8.500h14M4.500 11.500h14" stroke="#1c2b32" stroke-width="1.200"/>
    <circle cx="21" cy="21" r="9.500" fill="#1d1d1f" stroke="#6a6f73" stroke-width="1.300"/>
    <text x="21" y="26.500" text-anchor="middle" font-family="Liberation Sans" font-weight="bold" font-size="15" fill="#fff">4</text>
  </svg>
  <div class="a" style="left:1914px;top:0;width:1px;height:50px;background:#59656b"></div>
</div>
</body>
</html>
